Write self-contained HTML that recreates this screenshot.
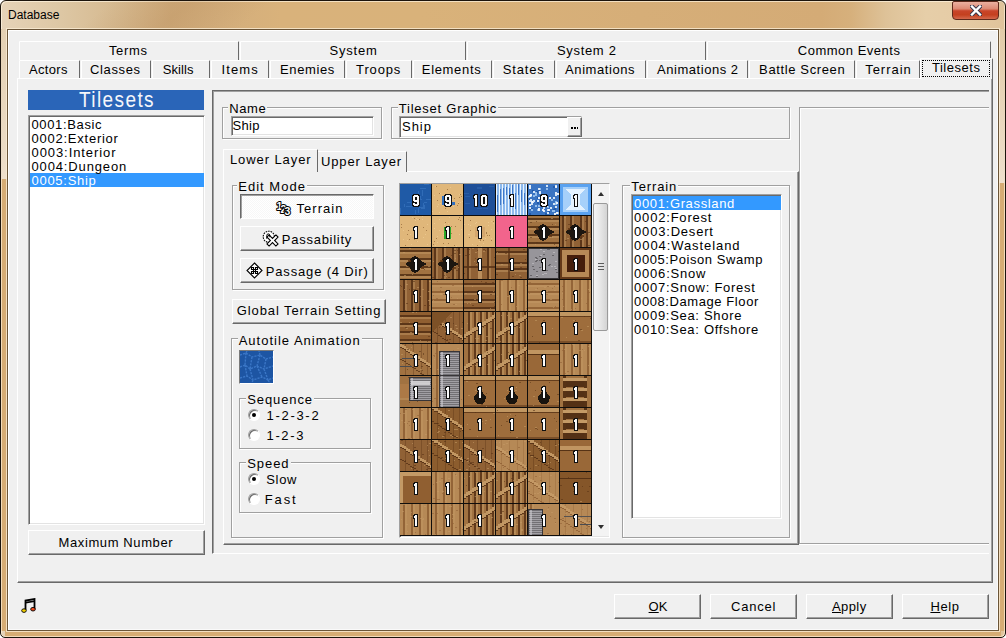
<!DOCTYPE html>
<html><head><meta charset="utf-8">
<style>
*{box-sizing:border-box;margin:0;padding:0}
html,body{width:1006px;height:638px;overflow:hidden;background:#fff}
body{position:relative;font-family:"Liberation Sans",sans-serif;font-size:13px;color:#000}
.a{position:absolute}
.t{position:absolute;white-space:nowrap;line-height:14px}
.frame{left:0;top:0;width:1006px;height:638px;border:1px solid #1c140c;border-radius:6px 6px 5px 5px;box-shadow:inset 1px 1px rgba(255,245,225,.7),inset -1px -1px rgba(255,245,225,.6);
 background:linear-gradient(90deg,#e6d3b8 0px,#ddc7a4 60px,#d5b88e 120px,#ceaa7a 170px,#d3ae7c 220px,#d9b27b 280px,#d9b27a 420px,#d6ae78 640px,#d4ab76 820px,#d6b07c 850px,#dec298 885px,#e6cea8 925px,#e6cca6 955px,#dfc39a 1006px)}
.close{left:952px;top:1px;width:47px;height:19px;border:1px solid #5e2a1c;border-radius:2px 2px 4px 4px;background:linear-gradient(180deg,#eab0a0 0%,#dc8a74 40%,#c9452a 52%,#c4401f 75%,#d4684c 100%)}
.client{left:7px;top:29px;width:992px;height:602px;background:#f0f0f0;border:1px solid #6b5538;box-shadow:inset 1px 1px #fff,inset -1px -1px #fafafa,0 0 0 1px rgba(250,236,212,.8)}
.raised{background:#f0f0f0;border-style:solid;border-width:1px;border-color:#fff #696969 #696969 #fff;box-shadow:inset -1px -1px #a0a0a0}
.sunken{border-style:solid;border-width:1px;border-color:#a0a0a0 #fff #fff #a0a0a0;box-shadow:inset 1px 1px #696969,inset -1px -1px #e3e3e3}
.group{border:1px solid #a0a0a0;box-shadow:inset 1px 1px #fff,1px 1px #fff}
.tab{border-style:solid;border-width:1px 1px 0 1px;border-color:#fff #696969 transparent #fff;border-radius:1px 1px 0 0;background:#f0f0f0}
.radio{width:12px;height:12px;border-radius:50%;border:1px solid;border-color:#a0a0a0 #fff #fff #a0a0a0;background:#fff;box-shadow:inset 1px 1px #696969}
.dot{left:3px;top:3px;width:4px;height:4px;border-radius:50%;background:#000}
.lbl{background:#f0f0f0;padding:0 1px}
</style></head><body>
<div class="a frame"></div>
<div class="a" style="left:95px;top:1px;width:160px;height:28px;transform:skewX(-50deg);background:linear-gradient(90deg,rgba(185,140,90,0),rgba(185,140,90,.28) 50%,rgba(185,140,90,0))"></div>
<div class="a close"><svg class="a" style="left:17px;top:3px" width="12" height="11" viewBox="0 0 12 11"><path d="M2 1.5 L10 9.5 M10 1.5 L2 9.5" stroke="#34344a" stroke-width="4.2" stroke-linecap="square"/><path d="M2 1.5 L10 9.5 M10 1.5 L2 9.5" stroke="#fff" stroke-width="2.4" stroke-linecap="square"/></svg></div>
<div class="a" style="left:1px;top:29px;width:6px;height:150px;background:linear-gradient(180deg,#e4d0b2,#ecdcc6 85%,#efe0cc)"></div>
<div class="a" style="left:999px;top:29px;width:6px;height:154px;background:linear-gradient(180deg,#e2cca8,#ecdcc6 85%,#efe0cc)"></div>
<div class="a" style="left:1px;top:179px;width:6px;height:452px;background:#d6ac74;box-shadow:inset 1px 0 rgba(255,240,215,.7)"></div>
<div class="a" style="left:999px;top:183px;width:6px;height:448px;background:#d6ac74;box-shadow:inset -1px 0 rgba(255,240,215,.7)"></div>
<div class="a" style="left:5px;top:631px;width:996px;height:6px;background:#d6ac74;box-shadow:inset 0 -1px rgba(255,240,215,.7)"></div>
<div class="a client"></div>
<div class="a tab" style="left:19px;top:41px;width:220px;height:19px"></div>
<div class="a tab" style="left:240px;top:41px;width:226px;height:19px"></div>
<div class="a tab" style="left:467px;top:41px;width:239px;height:19px"></div>
<div class="a tab" style="left:707px;top:41px;width:284px;height:19px"></div>
<div class="a tab" style="left:19px;top:60px;width:61px;height:19px"></div>
<div class="a tab" style="left:81px;top:60px;width:70px;height:19px"></div>
<div class="a tab" style="left:152px;top:60px;width:58px;height:19px"></div>
<div class="a tab" style="left:211px;top:60px;width:58px;height:19px"></div>
<div class="a tab" style="left:270px;top:60px;width:75px;height:19px"></div>
<div class="a tab" style="left:346px;top:60px;width:66px;height:19px"></div>
<div class="a tab" style="left:413px;top:60px;width:79px;height:19px"></div>
<div class="a tab" style="left:493px;top:60px;width:62px;height:19px"></div>
<div class="a tab" style="left:556px;top:60px;width:90px;height:19px"></div>
<div class="a tab" style="left:647px;top:60px;width:101px;height:19px"></div>
<div class="a tab" style="left:749px;top:60px;width:106px;height:19px"></div>
<div class="a tab" style="left:856px;top:60px;width:64px;height:19px"></div>
<div class="a" style="left:17px;top:78px;width:976px;height:505px;border-style:solid;border-width:1px;border-color:#fff #696969 #696969 #fff;box-shadow:inset -1px -1px #a0a0a0;background:#f0f0f0"></div>
<div class="a tab" style="left:920px;top:58px;width:73px;height:21px;border-bottom:0"><div class="a" style="left:1px;top:1px;width:68px;height:17px;border:1px dotted #000"></div></div>
<div class="a" style="left:28px;top:90px;width:176px;height:20px;background:#2a65b8;color:#f4f6fa;font-size:19px;line-height:22px;text-align:center;letter-spacing:1.4px;text-indent:1px"><span style="display:inline-block;transform:scaleY(1.12);transform-origin:50% 75%">Tilesets</span></div>
<div class="a sunken" style="left:28px;top:115px;width:177px;height:410px;background:#fff"></div>
<div class="a" style="left:30px;top:173px;width:174px;height:14px;background:#3399ff"></div>
<div class="a raised" style="left:28px;top:530px;width:177px;height:25px"></div>
<div class="a" style="left:212px;top:90px;width:777px;height:464px;border-style:solid;border-width:1px 0 1px 1px;border-color:#696969 #fff #fff #696969;box-shadow:inset 1px 1px #a0a0a0"></div>
<div class="a group" style="left:222px;top:107px;width:160px;height:32px"></div>
<div class="a sunken" style="left:231px;top:116px;width:143px;height:20px;background:#fff"></div>
<div class="a group" style="left:391px;top:107px;width:399px;height:32px"></div>
<div class="a sunken" style="left:399px;top:116px;width:183px;height:22px;background:#fff"></div>
<div class="a raised" style="left:567px;top:117px;width:15px;height:20px"><div class="a" style="left:3px;top:9px;width:7px;height:2px;background:repeating-linear-gradient(90deg,#000 0 2px,transparent 2px 3px)"></div></div>
<div class="a" style="left:799px;top:107px;width:190px;height:437px;border-style:solid;border-width:1px 0 1px 1px;border-color:#a0a0a0;box-shadow:inset 1px 1px #fff,0 1px #fff"></div>
<div class="a" style="left:223px;top:171px;width:576px;height:374px;border-style:solid;border-width:1px;border-color:#fff #696969 #696969 #fff;box-shadow:inset -1px -1px #a0a0a0"></div>
<div class="a tab" style="left:317px;top:151px;width:90px;height:21px"></div>
<div class="a tab" style="left:223px;top:149px;width:95px;height:23px;border-bottom:0"></div>
<div class="a group" style="left:232px;top:185px;width:152px;height:105px"></div>
<div class="a" style="left:240px;top:194px;width:134px;height:25px;border-style:solid;border-width:1px;border-color:#696969 #fff #fff #696969;box-shadow:inset 1px 1px #a0a0a0;background-color:#f7f7f7;background-image:linear-gradient(45deg,#fff 25%,transparent 25%,transparent 75%,#fff 75%),linear-gradient(45deg,#fff 25%,transparent 25%,transparent 75%,#fff 75%);background-size:2px 2px;background-position:0 0,1px 1px"></div>
<div class="a raised" style="left:240px;top:226px;width:134px;height:25px"></div>
<div class="a raised" style="left:240px;top:258px;width:134px;height:25px"></div>
<div class="a raised" style="left:232px;top:299px;width:154px;height:25px"></div>
<svg class="a" style="left:274px;top:198px" width="20" height="19" viewBox="0 0 20 19" font-family="Liberation Sans" font-weight="bold" font-size="10.5" fill="#fff" stroke="#000" stroke-width="2" paint-order="stroke" stroke-linejoin="round"><text x="2.5" y="12">1</text><text x="6.5" y="14.5">2</text><text x="10.5" y="17">3</text></svg>
<svg class="a" style="left:261px;top:229px" width="20" height="19" viewBox="0 0 20 19"><circle cx="7.8" cy="7.8" r="5.6" fill="#fff" stroke="#000" stroke-width="1.1" stroke-dasharray="1.6 0.9"/><polygon transform="translate(11.5 11.5) rotate(45)" points="-1.5,-6.3 1.5,-6.3 1.5,-1.5 6.3,-1.5 6.3,1.5 1.5,1.5 1.5,6.3 -1.5,6.3 -1.5,1.5 -6.3,1.5 -6.3,-1.5 -1.5,-1.5" fill="#fff" stroke="#000" stroke-width="1.1"/><path d="M5.8 9.8 V6.4 Q5.8 4.9 7.3 4.9 Q8.8 4.9 8.8 6.4 V8.2" fill="none" stroke="#000" stroke-width="1"/></svg>
<svg class="a" style="left:246px;top:262px" width="17" height="17" viewBox="0 0 17 17"><polygon points="8.5,1 16,8.5 8.5,16 1,8.5" fill="#fff" stroke="#000" stroke-width="1.1"/><path d="M5.5 5.5h2v2h-2zM9.5 5.5h2v2h-2zM5.5 9.5h2v2h-2zM9.5 9.5h2v2h-2zM5.5 7.5h6M5.5 9.5h6M7.5 5.5v6M9.5 5.5v6" fill="none" stroke="#000" stroke-width="1.1"/></svg>
<div class="a group" style="left:231px;top:338px;width:152px;height:200px"></div>
<div class="a" style="left:239px;top:350px;width:35px;height:34px;border-style:solid;border-width:1px;border-color:#7a7a7a #fff #fff #7a7a7a;background:#1d55a3;overflow:hidden"><svg width="33" height="32" viewBox="0 0 33 32"><path d="M0 4 L6 2 L12 6 L20 4 L26 8 L33 6 M0 16 L5 14 L10 18 L17 15 L24 18 L33 15 M0 27 L7 25 L13 29 L22 26 L28 29 L33 27 M6 2 L5 14 M12 6 L10 18 M20 4 L17 15 M26 8 L24 18 M5 14 L7 25 M10 18 L13 29 M17 15 L22 26 M24 18 L28 29 M13 29 L12 32 M28 29 L30 32 M6 2 L7 0 M20 4 L19 0" fill="none" stroke="#3a76c6" stroke-width="1.4" stroke-dasharray="2.2 1"/></svg></div>
<div class="a group" style="left:239px;top:398px;width:132px;height:51px"></div>
<div class="a group" style="left:239px;top:462px;width:132px;height:51px"></div>
<div class="a radio" style="left:248px;top:409px"><div class="a dot"></div></div>
<div class="a radio" style="left:248px;top:429px"></div>
<div class="a radio" style="left:248px;top:473px"><div class="a dot"></div></div>
<div class="a radio" style="left:248px;top:493px"></div>
<div class="a sunken" style="left:399px;top:183px;width:211px;height:355px;background:#f0f0f0"></div>
<div class="a" style="left:400px;top:184px;width:192px;height:352px;overflow:hidden;background:#b07a44"><svg width="192" height="352" viewBox="0 0 192 352" shape-rendering="crispEdges"><defs><g id="n1"><path fill="#101010" d="M14 10h3v3h-3zM15 10h3v3h-3zM13 11h3v3h-3zM14 11h3v3h-3zM15 11h3v3h-3zM13 12h3v3h-3zM14 12h3v3h-3zM15 12h3v3h-3zM14 13h3v3h-3zM15 13h3v3h-3zM14 14h3v3h-3zM15 14h3v3h-3zM14 15h3v3h-3zM15 15h3v3h-3zM14 16h3v3h-3zM15 16h3v3h-3zM14 17h3v3h-3zM15 17h3v3h-3zM14 18h3v3h-3zM15 18h3v3h-3zM14 19h3v3h-3zM15 19h3v3h-3zM14 20h3v3h-3zM15 20h3v3h-3z"/><path fill="#fafafa" d="M15 11h1v1h-1zM16 11h1v1h-1zM14 12h1v1h-1zM15 12h1v1h-1zM16 12h1v1h-1zM14 13h1v1h-1zM15 13h1v1h-1zM16 13h1v1h-1zM15 14h1v1h-1zM16 14h1v1h-1zM15 15h1v1h-1zM16 15h1v1h-1zM15 16h1v1h-1zM16 16h1v1h-1zM15 17h1v1h-1zM16 17h1v1h-1zM15 18h1v1h-1zM16 18h1v1h-1zM15 19h1v1h-1zM16 19h1v1h-1zM15 20h1v1h-1zM16 20h1v1h-1zM15 21h1v1h-1zM16 21h1v1h-1z"/></g><g id="n9"><path fill="#101010" d="M13 10h3v3h-3zM14 10h3v3h-3zM15 10h3v3h-3zM16 10h3v3h-3zM12 11h3v3h-3zM13 11h3v3h-3zM14 11h3v3h-3zM15 11h3v3h-3zM16 11h3v3h-3zM17 11h3v3h-3zM12 12h3v3h-3zM13 12h3v3h-3zM16 12h3v3h-3zM17 12h3v3h-3zM12 13h3v3h-3zM13 13h3v3h-3zM16 13h3v3h-3zM17 13h3v3h-3zM12 14h3v3h-3zM13 14h3v3h-3zM16 14h3v3h-3zM17 14h3v3h-3zM12 15h3v3h-3zM13 15h3v3h-3zM14 15h3v3h-3zM15 15h3v3h-3zM16 15h3v3h-3zM17 15h3v3h-3zM13 16h3v3h-3zM14 16h3v3h-3zM15 16h3v3h-3zM16 16h3v3h-3zM17 16h3v3h-3zM16 17h3v3h-3zM17 17h3v3h-3zM12 18h3v3h-3zM13 18h3v3h-3zM16 18h3v3h-3zM17 18h3v3h-3zM12 19h3v3h-3zM13 19h3v3h-3zM14 19h3v3h-3zM15 19h3v3h-3zM16 19h3v3h-3zM17 19h3v3h-3zM13 20h3v3h-3zM14 20h3v3h-3zM15 20h3v3h-3zM16 20h3v3h-3z"/><path fill="#fafafa" d="M14 11h1v1h-1zM15 11h1v1h-1zM16 11h1v1h-1zM17 11h1v1h-1zM13 12h1v1h-1zM14 12h1v1h-1zM15 12h1v1h-1zM16 12h1v1h-1zM17 12h1v1h-1zM18 12h1v1h-1zM13 13h1v1h-1zM14 13h1v1h-1zM17 13h1v1h-1zM18 13h1v1h-1zM13 14h1v1h-1zM14 14h1v1h-1zM17 14h1v1h-1zM18 14h1v1h-1zM13 15h1v1h-1zM14 15h1v1h-1zM17 15h1v1h-1zM18 15h1v1h-1zM13 16h1v1h-1zM14 16h1v1h-1zM15 16h1v1h-1zM16 16h1v1h-1zM17 16h1v1h-1zM18 16h1v1h-1zM14 17h1v1h-1zM15 17h1v1h-1zM16 17h1v1h-1zM17 17h1v1h-1zM18 17h1v1h-1zM17 18h1v1h-1zM18 18h1v1h-1zM13 19h1v1h-1zM14 19h1v1h-1zM17 19h1v1h-1zM18 19h1v1h-1zM13 20h1v1h-1zM14 20h1v1h-1zM15 20h1v1h-1zM16 20h1v1h-1zM17 20h1v1h-1zM18 20h1v1h-1zM14 21h1v1h-1zM15 21h1v1h-1zM16 21h1v1h-1zM17 21h1v1h-1z"/></g><g id="n10"><path fill="#101010" d="M10 10h3v3h-3zM11 10h3v3h-3zM9 11h3v3h-3zM10 11h3v3h-3zM11 11h3v3h-3zM9 12h3v3h-3zM10 12h3v3h-3zM11 12h3v3h-3zM10 13h3v3h-3zM11 13h3v3h-3zM10 14h3v3h-3zM11 14h3v3h-3zM10 15h3v3h-3zM11 15h3v3h-3zM10 16h3v3h-3zM11 16h3v3h-3zM10 17h3v3h-3zM11 17h3v3h-3zM10 18h3v3h-3zM11 18h3v3h-3zM10 19h3v3h-3zM11 19h3v3h-3zM10 20h3v3h-3zM11 20h3v3h-3zM17 10h3v3h-3zM18 10h3v3h-3zM19 10h3v3h-3zM20 10h3v3h-3zM16 11h3v3h-3zM17 11h3v3h-3zM18 11h3v3h-3zM19 11h3v3h-3zM20 11h3v3h-3zM21 11h3v3h-3zM16 12h3v3h-3zM17 12h3v3h-3zM20 12h3v3h-3zM21 12h3v3h-3zM16 13h3v3h-3zM17 13h3v3h-3zM20 13h3v3h-3zM21 13h3v3h-3zM16 14h3v3h-3zM17 14h3v3h-3zM20 14h3v3h-3zM21 14h3v3h-3zM16 15h3v3h-3zM17 15h3v3h-3zM20 15h3v3h-3zM21 15h3v3h-3zM16 16h3v3h-3zM17 16h3v3h-3zM20 16h3v3h-3zM21 16h3v3h-3zM16 17h3v3h-3zM17 17h3v3h-3zM20 17h3v3h-3zM21 17h3v3h-3zM16 18h3v3h-3zM17 18h3v3h-3zM20 18h3v3h-3zM21 18h3v3h-3zM16 19h3v3h-3zM17 19h3v3h-3zM18 19h3v3h-3zM19 19h3v3h-3zM20 19h3v3h-3zM21 19h3v3h-3zM17 20h3v3h-3zM18 20h3v3h-3zM19 20h3v3h-3zM20 20h3v3h-3z"/><path fill="#fafafa" d="M11 11h1v1h-1zM12 11h1v1h-1zM10 12h1v1h-1zM11 12h1v1h-1zM12 12h1v1h-1zM10 13h1v1h-1zM11 13h1v1h-1zM12 13h1v1h-1zM11 14h1v1h-1zM12 14h1v1h-1zM11 15h1v1h-1zM12 15h1v1h-1zM11 16h1v1h-1zM12 16h1v1h-1zM11 17h1v1h-1zM12 17h1v1h-1zM11 18h1v1h-1zM12 18h1v1h-1zM11 19h1v1h-1zM12 19h1v1h-1zM11 20h1v1h-1zM12 20h1v1h-1zM11 21h1v1h-1zM12 21h1v1h-1zM18 11h1v1h-1zM19 11h1v1h-1zM20 11h1v1h-1zM21 11h1v1h-1zM17 12h1v1h-1zM18 12h1v1h-1zM19 12h1v1h-1zM20 12h1v1h-1zM21 12h1v1h-1zM22 12h1v1h-1zM17 13h1v1h-1zM18 13h1v1h-1zM21 13h1v1h-1zM22 13h1v1h-1zM17 14h1v1h-1zM18 14h1v1h-1zM21 14h1v1h-1zM22 14h1v1h-1zM17 15h1v1h-1zM18 15h1v1h-1zM21 15h1v1h-1zM22 15h1v1h-1zM17 16h1v1h-1zM18 16h1v1h-1zM21 16h1v1h-1zM22 16h1v1h-1zM17 17h1v1h-1zM18 17h1v1h-1zM21 17h1v1h-1zM22 17h1v1h-1zM17 18h1v1h-1zM18 18h1v1h-1zM21 18h1v1h-1zM22 18h1v1h-1zM17 19h1v1h-1zM18 19h1v1h-1zM21 19h1v1h-1zM22 19h1v1h-1zM17 20h1v1h-1zM18 20h1v1h-1zM19 20h1v1h-1zM20 20h1v1h-1zM21 20h1v1h-1zM22 20h1v1h-1zM18 21h1v1h-1zM19 21h1v1h-1zM20 21h1v1h-1zM21 21h1v1h-1z"/></g></defs><path fill="#1f5aa6" d="M0 0h31v31h-31z"/><path fill="#3470bc" fill-opacity="0.8" d="M7 18h4v1h-4zM18 7h1v5h-1zM19 15h3v1h-3zM15 19h1v3h-1zM26 15h5v1h-5zM15 26h1v4h-1zM6 22h6v1h-6zM22 6h1v6h-1zM12 20h4v1h-4zM20 12h1v4h-1zM20 4h6v1h-6zM4 20h1v3h-1zM21 24h3v1h-3zM24 21h1v4h-1zM24 18h3v1h-3zM18 24h1v5h-1zM24 0h5v1h-5zM0 24h1v6h-1zM19 23h6v1h-6zM23 19h1v6h-1z"/><path fill="#0c0c0c" d="M31 0h1v32h-1zM0 31h32v1h-32z"/><path fill="#e0b77a" d="M32 0h31v31h-31z"/><path fill="#9a6e3e" fill-opacity="0.8" d="M45 24h1v1h-1zM58 19h1v1h-1zM47 5h1v1h-1zM61 12h1v1h-1zM36 2h1v1h-1zM37 16h1v1h-1zM39 9h1v1h-1zM54 14h1v1h-1zM57 21h1v1h-1zM60 10h1v1h-1zM46 17h1v1h-1zM59 13h1v1h-1zM51 12h1v1h-1zM50 19h1v1h-1z"/><path fill="#f0d098" fill-opacity="0.6" d="M45 18h1v1h-1zM39 28h1v1h-1zM42 21h1v1h-1zM61 29h1v1h-1zM32 27h1v1h-1zM40 19h1v1h-1zM53 22h1v1h-1zM37 22h1v1h-1zM59 10h1v1h-1zM62 17h1v1h-1zM60 18h1v1h-1zM50 3h1v1h-1zM54 20h1v1h-1zM38 20h1v1h-1zM58 18h1v1h-1zM40 9h1v1h-1zM35 2h1v1h-1zM47 27h1v1h-1zM52 15h1v1h-1zM34 11h1v1h-1z"/><path fill="#2f6fc0" d="M42 12h10v9h-10zM51 18h4v3h-4z"/><path fill="#0c0c0c" d="M63 0h1v32h-1zM32 31h32v1h-32z"/><path fill="#1e4f98" d="M64 0h31v31h-31z"/><path fill="#2a60aa" fill-opacity="0.8" d="M89 2h5v1h-5zM77 4h5v1h-5zM64 9h5v1h-5zM77 24h5v1h-5zM77 3h5v1h-5zM65 19h5v1h-5zM83 24h5v1h-5zM65 12h5v1h-5z"/><path fill="#0c0c0c" d="M95 0h1v32h-1zM64 31h32v1h-32z"/><path fill="#8cb8ec" d="M96 0h31v31h-31z"/><path fill="#f0f8ff" fill-opacity="0.95" d="M96 0h1v31h-1zM99 0h1v31h-1zM102 0h1v31h-1zM105 0h1v31h-1zM108 0h1v31h-1zM111 0h1v31h-1zM114 0h1v31h-1zM117 0h1v31h-1zM120 0h1v31h-1zM123 0h1v31h-1zM126 0h1v31h-1z"/><path fill="#2c68c0" fill-opacity="0.8" d="M97 11h1v17h-1zM100 5h1v16h-1zM103 4h1v16h-1zM106 3h1v8h-1zM109 4h1v8h-1zM112 1h1v9h-1zM115 9h1v16h-1zM118 0h1v11h-1zM121 6h1v12h-1zM124 9h1v12h-1zM127 2h1v19h-1z"/><path fill="#0c0c0c" d="M127 0h1v32h-1zM96 31h32v1h-32z"/><path fill="#3a74c2" d="M128 0h31v31h-31z"/><path fill="#1f58a8" fill-opacity="0.9" d="M129 15h2v2h-2zM129 24h2v2h-2zM129 29h2v2h-2zM129 29h2v2h-2zM131 24h2v2h-2zM132 6h2v2h-2zM136 7h2v2h-2zM136 16h2v2h-2zM137 13h2v2h-2zM137 16h2v2h-2zM137 18h2v2h-2zM138 5h2v2h-2zM140 14h2v2h-2zM145 29h2v2h-2zM146 1h2v2h-2zM147 20h2v2h-2zM148 12h2v2h-2zM148 25h2v2h-2zM148 27h2v2h-2zM153 2h2v2h-2zM153 25h2v2h-2zM154 24h2v2h-2z"/><path fill="#9cc4ee" fill-opacity="0.9" d="M128 12h2v2h-2zM130 11h2v2h-2zM131 25h2v2h-2zM133 11h2v2h-2zM135 8h2v2h-2zM135 10h2v2h-2zM135 21h2v2h-2zM137 25h2v2h-2zM138 21h2v2h-2zM139 4h2v2h-2zM139 8h2v2h-2zM141 20h2v2h-2zM142 11h2v2h-2zM142 11h2v2h-2zM145 10h2v2h-2zM145 10h2v2h-2zM146 4h2v2h-2zM147 22h2v2h-2zM151 15h2v2h-2zM152 26h2v2h-2zM153 26h2v2h-2zM155 17h2v2h-2zM155 19h2v2h-2zM157 28h2v2h-2z"/><path fill="#e8f2fc" fill-opacity="0.9" d="M129 16h2v2h-2zM130 15h2v2h-2zM131 19h2v2h-2zM132 17h2v2h-2zM133 7h2v2h-2zM133 16h2v2h-2zM138 4h2v2h-2zM139 7h2v2h-2zM139 8h2v2h-2zM143 20h2v2h-2zM143 23h2v2h-2zM143 26h2v2h-2zM144 16h2v2h-2zM144 17h2v2h-2zM146 1h2v2h-2zM146 21h2v2h-2zM147 25h2v2h-2zM147 28h2v2h-2zM150 23h2v2h-2zM153 13h2v2h-2zM153 19h2v2h-2zM155 1h2v2h-2zM155 10h2v2h-2zM155 22h2v2h-2z"/><path fill="#f8fcff" fill-opacity="0.9" d="M129 1h2v2h-2zM129 3h2v2h-2zM129 11h2v2h-2zM129 20h2v2h-2zM129 23h2v2h-2zM130 10h2v2h-2zM131 17h2v2h-2zM137 16h2v2h-2zM138 13h2v2h-2zM138 24h2v2h-2zM138 25h2v2h-2zM142 25h2v2h-2zM148 25h2v2h-2zM149 13h2v2h-2zM154 29h2v2h-2zM155 2h2v2h-2zM155 8h2v2h-2zM156 18h2v2h-2zM156 28h2v2h-2zM157 9h2v2h-2z"/><path fill="#0c0c0c" d="M159 0h1v32h-1zM128 31h32v1h-32z"/><path fill="#5aa2f0" d="M160 0h31v31h-31z"/><path fill="#a6d0fa" d="M163 3h25v25h-25z"/><polygon fill="#e4f2ff" points="166,5 185,5 180,11 180,20 185,26 166,26 171,20 171,11"/><path fill="#0c0c0c" d="M191 0h1v32h-1zM160 31h32v1h-32z"/><path fill="#e0b77a" d="M0 32h31v31h-31z"/><path fill="#9a6e3e" fill-opacity="0.8" d="M14 34h1v1h-1zM12 53h1v1h-1zM16 57h1v1h-1zM23 43h1v1h-1zM14 55h1v1h-1zM14 47h1v1h-1zM1 40h1v1h-1zM7 50h1v1h-1zM9 55h1v1h-1zM19 35h1v1h-1zM26 46h1v1h-1zM8 46h1v1h-1zM5 61h1v1h-1zM1 43h1v1h-1z"/><path fill="#f0d098" fill-opacity="0.6" d="M11 60h1v1h-1zM17 57h1v1h-1zM27 40h1v1h-1zM3 46h1v1h-1zM22 35h1v1h-1zM30 58h1v1h-1zM23 53h1v1h-1zM27 60h1v1h-1zM16 57h1v1h-1zM12 53h1v1h-1zM3 55h1v1h-1zM10 50h1v1h-1zM17 35h1v1h-1zM25 50h1v1h-1zM22 32h1v1h-1zM15 36h1v1h-1zM7 56h1v1h-1zM12 33h1v1h-1zM16 34h1v1h-1zM18 35h1v1h-1z"/><path fill="#0c0c0c" d="M31 32h1v32h-1zM0 63h32v1h-32z"/><path fill="#e0b77a" d="M32 32h31v31h-31z"/><path fill="#9a6e3e" fill-opacity="0.8" d="M54 61h1v1h-1zM45 38h1v1h-1zM59 33h1v1h-1zM43 59h1v1h-1zM60 36h1v1h-1zM33 60h1v1h-1zM36 54h1v1h-1zM48 59h1v1h-1zM55 42h1v1h-1zM51 42h1v1h-1zM58 35h1v1h-1zM34 57h1v1h-1zM51 49h1v1h-1zM49 55h1v1h-1z"/><path fill="#f0d098" fill-opacity="0.6" d="M39 35h1v1h-1zM49 55h1v1h-1zM35 61h1v1h-1zM49 33h1v1h-1zM49 42h1v1h-1zM59 50h1v1h-1zM37 58h1v1h-1zM34 39h1v1h-1zM37 52h1v1h-1zM39 46h1v1h-1zM51 54h1v1h-1zM56 62h1v1h-1zM44 40h1v1h-1zM43 51h1v1h-1zM44 62h1v1h-1zM43 49h1v1h-1zM45 62h1v1h-1zM34 44h1v1h-1zM48 39h1v1h-1zM61 45h1v1h-1z"/><path fill="#28a828" d="M44 43h7v12h-7z"/><path fill="#0c0c0c" d="M63 32h1v32h-1zM32 63h32v1h-32z"/><path fill="#e0b77a" d="M64 32h31v31h-31z"/><path fill="#9a6e3e" fill-opacity="0.8" d="M91 56h1v1h-1zM70 46h1v1h-1zM87 51h1v1h-1zM89 51h1v1h-1zM86 49h1v1h-1zM86 48h1v1h-1zM69 53h1v1h-1zM77 61h1v1h-1zM93 37h1v1h-1zM70 36h1v1h-1zM80 56h1v1h-1zM80 55h1v1h-1zM81 47h1v1h-1zM83 56h1v1h-1z"/><path fill="#f0d098" fill-opacity="0.6" d="M91 37h1v1h-1zM68 40h1v1h-1zM88 38h1v1h-1zM68 50h1v1h-1zM80 42h1v1h-1zM93 39h1v1h-1zM91 54h1v1h-1zM81 62h1v1h-1zM88 41h1v1h-1zM85 54h1v1h-1zM91 45h1v1h-1zM83 59h1v1h-1zM82 50h1v1h-1zM72 60h1v1h-1zM70 41h1v1h-1zM64 40h1v1h-1zM79 57h1v1h-1zM76 38h1v1h-1zM69 50h1v1h-1zM75 39h1v1h-1z"/><path fill="#c89660" fill-opacity="0.5" d="M75 43h10v10h-10z"/><path fill="#0c0c0c" d="M95 32h1v32h-1zM64 63h32v1h-32z"/><path fill="#f2648c" d="M96 32h31v31h-31z"/><path fill="#0c0c0c" d="M127 32h1v32h-1zM96 63h32v1h-32z"/><path fill="#b4804a" d="M128 32h31v31h-31z"/><path fill="#5e3618" fill-opacity="0.9" d="M128 34h31v2h-31zM128 42h31v2h-31zM128 50h31v2h-31zM128 58h31v2h-31z"/><path fill="#dcae74" fill-opacity="0.5" d="M128 36h31v2h-31zM128 44h31v2h-31zM128 52h31v2h-31zM128 60h31v2h-31z"/><path fill="#dcae74" fill-opacity="0.55" d="M151 34h2v1h-2zM135 60h1v1h-1zM152 53h1v1h-1zM155 40h1v1h-1zM150 53h1v1h-1zM145 42h1v1h-1z"/><path fill="#5e3618" fill-opacity="0.55" d="M138 47h1v1h-1zM150 47h1v1h-1zM154 60h1v1h-1zM156 62h1v1h-1zM152 40h1v1h-1zM136 37h1v1h-1zM141 34h1v1h-1zM136 58h2v1h-2zM142 50h2v1h-2zM138 42h2v1h-2zM130 38h2v1h-2zM130 53h2v1h-2z"/><polygon fill="#1c1612" points="133,48 138,45 139,42 143,40 147,42 149,45 155,48 149,51 147,55 143,57 139,55 138,51"/><path fill="#6a3a14" fill-opacity="0.8" d="M136 44h3v2h-3zM149 51h3v2h-3z"/><path fill="#0c0c0c" d="M159 32h1v32h-1zM128 63h32v1h-32z"/><path fill="#a06c3c" d="M160 32h31v31h-31z"/><path fill="#5e3618" fill-opacity="0.9" d="M162 32h2v31h-2zM170 32h2v31h-2zM180 32h2v31h-2zM186 32h2v31h-2z"/><path fill="#dcae74" fill-opacity="0.45" d="M164 32h2v31h-2zM172 32h2v31h-2zM182 32h2v31h-2zM188 32h2v31h-2z"/><path fill="#dcae74" fill-opacity="0.55" d="M190 54h2v1h-2zM190 62h2v1h-2zM177 48h1v1h-1zM176 43h1v1h-1zM181 55h1v1h-1zM189 49h1v1h-1zM180 55h2v1h-2zM164 33h2v1h-2zM167 54h2v1h-2z"/><path fill="#5e3618" fill-opacity="0.55" d="M188 48h2v1h-2zM171 56h2v1h-2zM181 53h2v1h-2zM183 52h1v1h-1zM188 61h2v1h-2zM180 37h2v1h-2zM185 37h1v1h-1zM165 56h2v1h-2zM168 40h2v1h-2z"/><polygon fill="#1c1612" points="165,48 170,45 171,42 175,40 179,42 181,45 187,48 181,51 179,55 175,57 171,55 170,51"/><path fill="#6a3a14" fill-opacity="0.8" d="M168 44h3v2h-3zM181 51h3v2h-3z"/><path fill="#0c0c0c" d="M191 32h1v32h-1zM160 63h32v1h-32z"/><path fill="#b4804a" d="M0 64h31v31h-31z"/><path fill="#5e3618" fill-opacity="0.9" d="M0 66h31v2h-31zM0 74h31v2h-31zM0 82h31v2h-31zM0 90h31v2h-31z"/><path fill="#dcae74" fill-opacity="0.5" d="M0 68h31v2h-31zM0 76h31v2h-31zM0 84h31v2h-31zM0 92h31v2h-31z"/><path fill="#dcae74" fill-opacity="0.55" d="M30 76h2v1h-2zM3 68h2v1h-2zM6 82h2v1h-2zM12 90h1v1h-1zM4 91h2v1h-2zM17 80h1v1h-1zM9 64h2v1h-2zM28 82h2v1h-2zM16 85h2v1h-2zM21 79h1v1h-1z"/><path fill="#5e3618" fill-opacity="0.55" d="M24 66h2v1h-2zM21 67h1v1h-1zM6 91h2v1h-2zM30 90h2v1h-2zM23 84h1v1h-1zM24 85h1v1h-1zM16 84h2v1h-2zM25 80h1v1h-1z"/><polygon fill="#1c1612" points="5,80 10,77 11,74 15,72 19,74 21,77 27,80 21,83 19,87 15,89 11,87 10,83"/><path fill="#6a3a14" fill-opacity="0.8" d="M8 76h3v2h-3zM21 83h3v2h-3z"/><path fill="#0c0c0c" d="M31 64h1v32h-1zM0 95h32v1h-32z"/><path fill="#a06c3c" d="M32 64h31v31h-31z"/><path fill="#5e3618" fill-opacity="0.9" d="M34 64h2v31h-2zM42 64h2v31h-2zM52 64h2v31h-2zM58 64h2v31h-2z"/><path fill="#dcae74" fill-opacity="0.45" d="M36 64h2v31h-2zM44 64h2v31h-2zM54 64h2v31h-2zM60 64h2v31h-2z"/><path fill="#dcae74" fill-opacity="0.55" d="M58 83h1v1h-1zM55 74h1v1h-1zM59 70h2v1h-2zM33 77h1v1h-1zM46 92h1v1h-1z"/><path fill="#5e3618" fill-opacity="0.55" d="M48 93h2v1h-2zM41 94h1v1h-1zM57 66h1v1h-1zM51 71h1v1h-1zM32 93h2v1h-2zM59 75h1v1h-1zM39 79h2v1h-2zM54 69h2v1h-2zM54 66h2v1h-2zM47 73h1v1h-1zM56 86h2v1h-2zM43 91h2v1h-2zM43 83h2v1h-2z"/><polygon fill="#1c1612" points="37,80 42,77 43,74 47,72 51,74 53,77 59,80 53,83 51,87 47,89 43,87 42,83"/><path fill="#6a3a14" fill-opacity="0.8" d="M40 76h3v2h-3zM53 83h3v2h-3z"/><path fill="#0c0c0c" d="M63 64h1v32h-1zM32 95h32v1h-32z"/><path fill="#a06c3c" d="M64 64h31v31h-31z"/><path fill="#5e3618" fill-opacity="0.9" d="M67 64h2v31h-2zM87 64h2v31h-2z"/><path fill="#dcae74" fill-opacity="0.45" d="M69 64h2v31h-2zM89 64h2v31h-2z"/><path fill="#dcae74" fill-opacity="0.55" d="M75 68h2v1h-2zM76 80h1v1h-1zM74 77h1v1h-1zM83 67h2v1h-2zM89 94h2v1h-2zM72 64h2v1h-2z"/><path fill="#5e3618" fill-opacity="0.55" d="M64 89h1v1h-1zM69 70h1v1h-1zM68 67h1v1h-1zM69 65h1v1h-1zM65 71h2v1h-2zM79 64h1v1h-1zM76 79h1v1h-1zM83 65h2v1h-2zM94 73h2v1h-2zM75 74h1v1h-1zM77 66h1v1h-1zM85 66h1v1h-1z"/><path fill="#dcae74" fill-opacity="0.8" d="M78 64h4v31h-4z"/><path fill="#5e3618" fill-opacity="0.8" d="M64 82h31v2h-31z"/><path fill="#0c0c0c" d="M95 64h1v32h-1zM64 95h32v1h-32z"/><path fill="#a06c3c" d="M96 64h31v31h-31z"/><path fill="#5e3618" fill-opacity="0.9" d="M96 67h31v2h-31zM96 78h31v2h-31zM96 84h31v2h-31z"/><path fill="#dcae74" fill-opacity="0.5" d="M96 69h31v2h-31zM96 80h31v2h-31zM96 86h31v2h-31z"/><path fill="#dcae74" fill-opacity="0.55" d="M120 79h2v1h-2zM108 81h2v1h-2zM119 91h2v1h-2zM101 80h2v1h-2zM97 68h1v1h-1zM115 90h1v1h-1z"/><path fill="#5e3618" fill-opacity="0.55" d="M97 79h1v1h-1zM112 92h2v1h-2zM125 75h1v1h-1zM120 83h2v1h-2zM105 69h2v1h-2zM120 93h2v1h-2zM113 75h1v1h-1zM109 78h1v1h-1zM118 79h2v1h-2zM96 90h2v1h-2zM118 85h1v1h-1zM123 65h2v1h-2z"/><path fill="#5e3618" fill-opacity="0.7" d="M108 64h2v31h-2z"/><path fill="#0c0c0c" d="M127 64h1v32h-1zM96 95h32v1h-32z"/><path fill="#3a3a3e" d="M128 64h31v31h-31z"/><path fill="#a8a8b0" d="M129 65h29v29h-29z"/><path fill="#6a6a72" fill-opacity="0.9" d="M130 91h2v1h-2zM132 79h2v1h-2zM132 82h2v1h-2zM133 85h2v1h-2zM135 73h2v1h-2zM135 77h2v1h-2zM136 74h2v1h-2zM136 76h2v1h-2zM136 87h2v1h-2zM136 92h2v1h-2zM139 72h2v1h-2zM139 76h2v1h-2zM139 83h2v1h-2zM143 70h2v1h-2zM143 74h2v1h-2zM144 89h2v1h-2zM146 86h2v1h-2zM147 65h2v1h-2zM148 65h2v1h-2zM148 81h2v1h-2zM149 80h2v1h-2zM152 71h2v1h-2zM155 85h2v1h-2zM156 88h2v1h-2z"/><path fill="#d0d0d8" fill-opacity="0.9" d="M132 79h2v1h-2zM135 75h2v1h-2zM136 91h2v1h-2zM140 65h2v1h-2zM140 71h2v1h-2zM141 84h2v1h-2zM142 90h2v1h-2zM143 67h2v1h-2zM144 83h2v1h-2zM144 89h2v1h-2zM145 89h2v1h-2zM151 82h2v1h-2zM153 68h2v1h-2zM154 82h2v1h-2zM155 77h2v1h-2zM155 84h2v1h-2z"/><path fill="#0c0c0c" d="M159 64h1v32h-1zM128 95h32v1h-32z"/><path fill="#6e3e1c" d="M160 64h31v31h-31z"/><path fill="#cc9a62" d="M162 66h27v27h-27z"/><path fill="#4a200c" d="M167 71h18v17h-18z"/><path fill="#0c0c0c" d="M191 64h1v32h-1zM160 95h32v1h-32z"/><path fill="#a06c3c" d="M0 96h31v31h-31z"/><path fill="#5e3618" fill-opacity="0.9" d="M3 96h2v31h-2zM11 96h2v31h-2zM19 96h2v31h-2zM27 96h2v31h-2z"/><path fill="#dcae74" fill-opacity="0.45" d="M5 96h2v31h-2zM13 96h2v31h-2zM21 96h2v31h-2zM29 96h2v31h-2z"/><path fill="#dcae74" fill-opacity="0.55" d="M29 97h2v1h-2zM4 105h1v1h-1zM6 100h2v1h-2zM22 105h2v1h-2zM28 116h2v1h-2zM17 103h2v1h-2zM28 107h2v1h-2zM20 112h1v1h-1z"/><path fill="#5e3618" fill-opacity="0.55" d="M0 101h1v1h-1zM1 102h1v1h-1zM13 97h2v1h-2zM6 119h2v1h-2zM14 105h2v1h-2zM13 105h2v1h-2zM9 105h1v1h-1zM29 121h1v1h-1zM5 126h1v1h-1zM24 121h2v1h-2z"/><path fill="#0c0c0c" d="M31 96h1v32h-1zM0 127h32v1h-32z"/><path fill="#cc9a62" d="M32 96h31v31h-31z"/><path fill="#a06c3c" fill-opacity="0.9" d="M32 99h31v2h-31zM32 107h31v2h-31zM32 115h31v2h-31zM32 123h31v2h-31z"/><path fill="#dcae74" fill-opacity="0.5" d="M32 101h31v2h-31zM32 109h31v2h-31zM32 117h31v2h-31zM32 125h31v2h-31z"/><path fill="#dcae74" fill-opacity="0.55" d="M62 121h2v1h-2zM40 109h2v1h-2zM33 116h1v1h-1zM57 114h1v1h-1zM55 120h2v1h-2zM40 110h2v1h-2z"/><path fill="#a06c3c" fill-opacity="0.55" d="M33 111h1v1h-1zM51 113h1v1h-1zM40 103h2v1h-2zM40 106h1v1h-1zM58 106h1v1h-1zM37 97h1v1h-1zM33 124h2v1h-2zM53 120h2v1h-2zM52 101h2v1h-2zM53 100h1v1h-1zM43 110h2v1h-2zM36 114h2v1h-2z"/><path fill="#0c0c0c" d="M63 96h1v32h-1zM32 127h32v1h-32z"/><path fill="#a06c3c" d="M64 96h31v31h-31z"/><path fill="#5e3618" fill-opacity="0.9" d="M64 99h31v2h-31zM64 107h31v2h-31zM64 115h31v2h-31zM64 123h31v2h-31z"/><path fill="#dcae74" fill-opacity="0.5" d="M64 101h31v2h-31zM64 109h31v2h-31zM64 117h31v2h-31zM64 125h31v2h-31z"/><path fill="#dcae74" fill-opacity="0.55" d="M65 109h2v1h-2zM93 107h1v1h-1zM72 102h1v1h-1zM74 115h2v1h-2zM70 119h1v1h-1zM67 119h1v1h-1zM90 124h1v1h-1z"/><path fill="#5e3618" fill-opacity="0.55" d="M90 110h2v1h-2zM82 115h1v1h-1zM72 121h2v1h-2zM85 98h2v1h-2zM79 124h2v1h-2zM94 122h2v1h-2zM65 100h2v1h-2zM92 98h2v1h-2zM94 118h1v1h-1zM79 110h2v1h-2zM81 97h1v1h-1z"/><path fill="#0c0c0c" d="M95 96h1v32h-1zM64 127h32v1h-32z"/><path fill="#cc9a62" d="M96 96h31v31h-31z"/><path fill="#a06c3c" fill-opacity="0.9" d="M99 96h2v31h-2zM107 96h2v31h-2zM115 96h2v31h-2zM123 96h2v31h-2z"/><path fill="#dcae74" fill-opacity="0.45" d="M101 96h2v31h-2zM109 96h2v31h-2zM117 96h2v31h-2zM125 96h2v31h-2z"/><path fill="#dcae74" fill-opacity="0.55" d="M118 101h2v1h-2zM116 122h1v1h-1zM97 112h1v1h-1zM107 126h1v1h-1zM96 126h2v1h-2zM107 112h2v1h-2z"/><path fill="#a06c3c" fill-opacity="0.55" d="M126 101h1v1h-1zM116 96h1v1h-1zM101 120h1v1h-1zM108 120h1v1h-1zM101 96h2v1h-2zM99 100h2v1h-2zM111 103h1v1h-1zM126 124h2v1h-2zM123 106h2v1h-2zM110 113h2v1h-2zM113 110h2v1h-2zM115 105h1v1h-1z"/><path fill="#0c0c0c" d="M127 96h1v32h-1zM96 127h32v1h-32z"/><path fill="#cc9a62" d="M128 96h31v31h-31z"/><path fill="#a06c3c" fill-opacity="0.9" d="M128 99h31v2h-31zM128 107h31v2h-31zM128 115h31v2h-31zM128 123h31v2h-31z"/><path fill="#dcae74" fill-opacity="0.5" d="M128 101h31v2h-31zM128 109h31v2h-31zM128 117h31v2h-31zM128 125h31v2h-31z"/><path fill="#dcae74" fill-opacity="0.55" d="M128 101h1v1h-1zM146 117h2v1h-2zM146 107h2v1h-2zM150 115h2v1h-2zM154 106h2v1h-2zM144 103h2v1h-2zM135 105h2v1h-2zM153 123h1v1h-1zM144 112h2v1h-2z"/><path fill="#a06c3c" fill-opacity="0.55" d="M155 122h1v1h-1zM154 102h1v1h-1zM129 109h1v1h-1zM152 104h1v1h-1zM146 110h2v1h-2zM147 102h2v1h-2zM137 104h1v1h-1zM142 100h2v1h-2zM129 98h2v1h-2z"/><path fill="#0c0c0c" d="M159 96h1v32h-1zM128 127h32v1h-32z"/><path fill="#cc9a62" d="M160 96h31v31h-31z"/><path fill="#a06c3c" fill-opacity="0.9" d="M163 96h2v31h-2zM171 96h2v31h-2zM179 96h2v31h-2zM187 96h2v31h-2z"/><path fill="#dcae74" fill-opacity="0.45" d="M165 96h2v31h-2zM173 96h2v31h-2zM181 96h2v31h-2zM189 96h2v31h-2z"/><path fill="#dcae74" fill-opacity="0.55" d="M171 125h1v1h-1zM166 96h1v1h-1zM189 106h2v1h-2zM181 114h1v1h-1zM188 105h2v1h-2zM163 122h1v1h-1zM162 109h1v1h-1z"/><path fill="#a06c3c" fill-opacity="0.55" d="M187 115h2v1h-2zM187 108h2v1h-2zM162 107h1v1h-1zM175 124h1v1h-1zM187 108h2v1h-2zM171 112h2v1h-2zM164 106h1v1h-1zM162 115h1v1h-1zM162 102h2v1h-2zM186 119h1v1h-1zM189 108h1v1h-1z"/><path fill="#0c0c0c" d="M191 96h1v32h-1zM160 127h32v1h-32z"/><path fill="#a06a38" d="M0 128h31v31h-31z"/><path fill="#5e3618" fill-opacity="0.9" d="M0 131h31v2h-31zM0 139h31v2h-31zM0 147h31v2h-31zM0 155h31v2h-31z"/><path fill="#dcae74" fill-opacity="0.5" d="M0 133h31v2h-31zM0 141h31v2h-31zM0 149h31v2h-31zM0 157h31v2h-31z"/><path fill="#dcae74" fill-opacity="0.55" d="M12 128h2v1h-2zM6 144h2v1h-2zM0 138h2v1h-2zM20 156h1v1h-1zM10 148h2v1h-2zM16 128h1v1h-1zM2 133h1v1h-1zM9 138h1v1h-1z"/><path fill="#5e3618" fill-opacity="0.55" d="M5 143h2v1h-2zM30 149h2v1h-2zM3 148h1v1h-1zM28 152h2v1h-2zM7 156h2v1h-2zM12 158h1v1h-1zM26 155h2v1h-2zM14 149h1v1h-1zM11 147h2v1h-2zM27 157h1v1h-1z"/><path fill="#0c0c0c" d="M31 128h1v32h-1zM0 159h32v1h-32z"/><path fill="#a06c3c" d="M32 128h31v31h-31z"/><path fill="#5e3618" fill-opacity="0.35" d="M37 128h1v31h-1zM45 128h1v31h-1zM53 128h1v31h-1zM59 128h1v31h-1z"/><path fill="#dcae74" fill-opacity="0.95" d="M32 132h2v3h-2zM34 133h2v3h-2zM36 134h2v3h-2zM38 136h2v3h-2zM40 137h2v3h-2zM42 139h2v3h-2zM44 140h2v3h-2zM46 141h2v3h-2zM48 143h2v3h-2zM50 144h2v3h-2zM52 146h2v3h-2zM54 147h2v3h-2zM56 148h2v3h-2zM58 150h2v3h-2zM60 151h2v3h-2zM62 153h2v3h-2z"/><path fill="#5e3618" fill-opacity="0.9" d="M32 135h2v1h-2zM34 136h2v1h-2zM36 137h2v1h-2zM38 139h2v1h-2zM40 140h2v1h-2zM42 142h2v1h-2zM44 143h2v1h-2zM46 144h2v1h-2zM48 146h2v1h-2zM50 147h2v1h-2zM52 149h2v1h-2zM54 150h2v1h-2zM56 151h2v1h-2zM58 153h2v1h-2zM60 154h2v1h-2zM62 156h2v1h-2z"/><path fill="#5e3618" fill-opacity="0.8" d="M32 147h2v1h-2zM34 148h2v1h-2zM36 149h2v1h-2zM38 151h2v1h-2zM40 152h2v1h-2zM42 154h2v1h-2zM44 155h2v1h-2zM46 156h2v1h-2zM48 158h2v1h-2z"/><path fill="#dcae74" fill-opacity="0.55" d="M55 141h2v1h-2zM61 144h2v1h-2zM41 142h1v1h-1zM56 144h2v1h-2zM45 147h1v1h-1zM50 133h2v1h-2z"/><path fill="#5e3618" fill-opacity="0.55" d="M47 155h1v1h-1zM35 158h2v1h-2zM42 133h1v1h-1zM39 140h1v1h-1zM43 140h1v1h-1zM40 139h2v1h-2zM62 138h1v1h-1zM39 143h1v1h-1zM53 139h1v1h-1zM46 139h1v1h-1zM49 155h2v1h-2zM45 149h2v1h-2z"/><polygon fill="#8a5a2c" points="32,128 52,128 32,148"/><path fill="#0c0c0c" d="M63 128h1v32h-1zM32 159h32v1h-32z"/><path fill="#b4804a" d="M64 128h31v31h-31z"/><path fill="#5e3618" fill-opacity="0.85" d="M68 128h2v31h-2zM74 128h2v31h-2zM80 128h2v31h-2zM86 128h2v31h-2zM92 128h2v31h-2z"/><path fill="#dcae74" fill-opacity="0.55" d="M70 128h2v31h-2zM76 128h2v31h-2zM82 128h2v31h-2zM88 128h2v31h-2zM94 128h2v31h-2z"/><path fill="#dcae74" fill-opacity="0.95" d="M64 150h2v4h-2zM66 148h2v4h-2zM68 147h2v4h-2zM70 146h2v4h-2zM72 144h2v4h-2zM74 143h2v4h-2zM76 142h2v4h-2zM78 140h2v4h-2zM80 139h2v4h-2zM82 138h2v4h-2zM84 137h2v4h-2zM86 135h2v4h-2zM88 134h2v4h-2zM90 133h2v4h-2zM92 131h2v4h-2zM94 130h2v4h-2z"/><path fill="#5e3618" fill-opacity="0.9" d="M64 154h2v1h-2zM66 152h2v1h-2zM68 151h2v1h-2zM70 150h2v1h-2zM72 148h2v1h-2zM74 147h2v1h-2zM76 146h2v1h-2zM78 144h2v1h-2zM80 143h2v1h-2zM82 142h2v1h-2zM84 141h2v1h-2zM86 139h2v1h-2zM88 138h2v1h-2zM90 137h2v1h-2zM92 135h2v1h-2zM94 134h2v1h-2z"/><path fill="#dcae74" fill-opacity="0.55" d="M77 138h1v1h-1zM67 139h1v1h-1zM79 148h1v1h-1zM75 154h1v1h-1zM86 152h2v1h-2zM85 156h2v1h-2zM77 154h2v1h-2z"/><path fill="#5e3618" fill-opacity="0.55" d="M90 144h2v1h-2zM83 143h1v1h-1zM78 139h2v1h-2z"/><path fill="#0c0c0c" d="M95 128h1v32h-1zM64 159h32v1h-32z"/><path fill="#b4804a" d="M96 128h31v31h-31z"/><path fill="#5e3618" fill-opacity="0.85" d="M100 128h2v31h-2zM106 128h2v31h-2zM112 128h2v31h-2zM118 128h2v31h-2zM124 128h2v31h-2z"/><path fill="#dcae74" fill-opacity="0.55" d="M102 128h2v31h-2zM108 128h2v31h-2zM114 128h2v31h-2zM120 128h2v31h-2zM126 128h2v31h-2z"/><path fill="#dcae74" fill-opacity="0.95" d="M96 150h2v4h-2zM98 148h2v4h-2zM100 147h2v4h-2zM102 146h2v4h-2zM104 144h2v4h-2zM106 143h2v4h-2zM108 142h2v4h-2zM110 140h2v4h-2zM112 139h2v4h-2zM114 138h2v4h-2zM116 137h2v4h-2zM118 135h2v4h-2zM120 134h2v4h-2zM122 133h2v4h-2zM124 131h2v4h-2zM126 130h2v4h-2z"/><path fill="#5e3618" fill-opacity="0.9" d="M96 154h2v1h-2zM98 152h2v1h-2zM100 151h2v1h-2zM102 150h2v1h-2zM104 148h2v1h-2zM106 147h2v1h-2zM108 146h2v1h-2zM110 144h2v1h-2zM112 143h2v1h-2zM114 142h2v1h-2zM116 141h2v1h-2zM118 139h2v1h-2zM120 138h2v1h-2zM122 137h2v1h-2zM124 135h2v1h-2zM126 134h2v1h-2z"/><path fill="#dcae74" fill-opacity="0.55" d="M118 134h2v1h-2zM119 143h1v1h-1zM110 134h2v1h-2zM107 131h1v1h-1zM118 134h1v1h-1zM101 131h1v1h-1zM99 157h2v1h-2z"/><path fill="#5e3618" fill-opacity="0.55" d="M109 149h2v1h-2zM107 146h1v1h-1zM106 145h1v1h-1z"/><path fill="#0c0c0c" d="M127 128h1v32h-1zM96 159h32v1h-32z"/><path fill="#b07a44" d="M128 128h31v31h-31z"/><path fill="#dcae74" fill-opacity="0.9" d="M128 128h31v4h-31z"/><path fill="#5e3618" fill-opacity="0.8" d="M128 132h31v1h-31z"/><path fill="#5e3618" fill-opacity="0.5" d="M128 157h31v2h-31z"/><path fill="#dcae74" fill-opacity="0.55" d="M136 131h1v1h-1zM152 144h1v1h-1zM135 136h2v1h-2zM156 131h1v1h-1z"/><path fill="#5e3618" fill-opacity="0.55" d="M144 138h2v1h-2zM143 136h2v1h-2zM143 139h2v1h-2zM139 158h1v1h-1zM132 152h1v1h-1zM142 138h1v1h-1z"/><path fill="#0c0c0c" d="M159 128h1v32h-1zM128 159h32v1h-32z"/><path fill="#b07a44" d="M160 128h31v31h-31z"/><path fill="#dcae74" fill-opacity="0.9" d="M160 128h31v4h-31z"/><path fill="#5e3618" fill-opacity="0.8" d="M160 132h31v1h-31z"/><path fill="#5e3618" fill-opacity="0.5" d="M160 157h31v2h-31z"/><path fill="#dcae74" fill-opacity="0.55" d="M187 142h2v1h-2zM181 146h2v1h-2zM173 136h2v1h-2zM161 133h2v1h-2zM166 153h1v1h-1z"/><path fill="#5e3618" fill-opacity="0.55" d="M184 132h1v1h-1zM175 136h1v1h-1zM178 156h2v1h-2zM190 134h2v1h-2zM180 145h2v1h-2z"/><path fill="#0c0c0c" d="M191 128h1v32h-1zM160 159h32v1h-32z"/><path fill="#b4804a" d="M0 160h31v31h-31z"/><path fill="#5e3618" fill-opacity="0.35" d="M5 160h1v31h-1zM13 160h1v31h-1zM21 160h1v31h-1zM27 160h1v31h-1z"/><path fill="#dcae74" fill-opacity="0.95" d="M0 160h2v3h-2zM2 161h2v3h-2zM4 162h2v3h-2zM6 164h2v3h-2zM8 165h2v3h-2zM10 167h2v3h-2zM12 168h2v3h-2zM14 169h2v3h-2zM16 171h2v3h-2zM18 172h2v3h-2zM20 174h2v3h-2zM22 175h2v3h-2zM24 176h2v3h-2zM26 178h2v3h-2zM28 179h2v3h-2zM30 181h2v3h-2z"/><path fill="#5e3618" fill-opacity="0.9" d="M0 163h2v1h-2zM2 164h2v1h-2zM4 165h2v1h-2zM6 167h2v1h-2zM8 168h2v1h-2zM10 170h2v1h-2zM12 171h2v1h-2zM14 172h2v1h-2zM16 174h2v1h-2zM18 175h2v1h-2zM20 177h2v1h-2zM22 178h2v1h-2zM24 179h2v1h-2zM26 181h2v1h-2zM28 182h2v1h-2zM30 184h2v1h-2z"/><path fill="#5e3618" fill-opacity="0.8" d="M0 175h2v1h-2zM2 176h2v1h-2zM4 177h2v1h-2zM6 179h2v1h-2zM8 180h2v1h-2zM10 182h2v1h-2zM12 183h2v1h-2zM14 184h2v1h-2zM16 186h2v1h-2zM18 187h2v1h-2zM20 189h2v1h-2zM22 190h2v1h-2z"/><path fill="#dcae74" fill-opacity="0.55" d="M2 179h1v1h-1zM4 163h1v1h-1zM20 185h2v1h-2zM1 170h2v1h-2zM11 163h1v1h-1zM12 160h2v1h-2zM12 170h1v1h-1z"/><path fill="#5e3618" fill-opacity="0.55" d="M5 166h1v1h-1zM23 169h1v1h-1zM10 181h1v1h-1zM17 181h2v1h-2zM22 186h1v1h-1zM21 182h2v1h-2zM23 170h1v1h-1zM7 185h1v1h-1zM7 165h2v1h-2zM19 167h2v1h-2zM12 160h2v1h-2z"/><path fill="#50545c" d="M0 182h12v1h-12zM2 174h14v1h-14z"/><path fill="#0c0c0c" d="M31 160h1v32h-1zM0 191h32v1h-32z"/><path fill="#cc9a62" d="M32 160h31v31h-31z"/><path fill="#a06c3c" fill-opacity="0.9" d="M36 160h2v31h-2z"/><path fill="#dcae74" fill-opacity="0.45" d="M38 160h2v31h-2z"/><path fill="#dcae74" fill-opacity="0.55" d="M46 178h2v1h-2zM51 172h1v1h-1zM45 180h2v1h-2zM37 185h2v1h-2zM34 175h1v1h-1zM48 187h2v1h-2zM47 175h2v1h-2zM57 164h2v1h-2zM55 172h1v1h-1zM34 190h2v1h-2z"/><path fill="#a06c3c" fill-opacity="0.55" d="M35 169h1v1h-1zM36 169h1v1h-1zM48 169h1v1h-1zM56 173h1v1h-1zM47 179h1v1h-1zM33 171h2v1h-2zM34 172h1v1h-1zM53 166h1v1h-1z"/><path fill="#3a3a40" d="M39 167h21v25h-21z"/><path fill="#b4b4bc" d="M40 168h19v23h-19z"/><path fill="#78787e" fill-opacity="0.9" d="M40 168h19v1h-19zM40 170h19v1h-19zM40 172h19v1h-19zM40 174h19v1h-19zM40 176h19v1h-19zM40 178h19v1h-19zM40 180h19v1h-19zM40 182h19v1h-19zM40 184h19v1h-19zM40 186h19v1h-19zM40 188h19v1h-19zM40 190h19v1h-19z"/><path fill="#e8e8f0" fill-opacity="0.6" d="M41 168h2v23h-2z"/><path fill="#0c0c0c" d="M63 160h1v32h-1zM32 191h32v1h-32z"/><path fill="#b4804a" d="M64 160h31v31h-31z"/><path fill="#5e3618" fill-opacity="0.85" d="M68 160h2v31h-2zM74 160h2v31h-2zM80 160h2v31h-2zM86 160h2v31h-2zM92 160h2v31h-2z"/><path fill="#dcae74" fill-opacity="0.55" d="M70 160h2v31h-2zM76 160h2v31h-2zM82 160h2v31h-2zM88 160h2v31h-2zM94 160h2v31h-2z"/><path fill="#dcae74" fill-opacity="0.95" d="M64 182h2v4h-2zM66 180h2v4h-2zM68 179h2v4h-2zM70 178h2v4h-2zM72 176h2v4h-2zM74 175h2v4h-2zM76 174h2v4h-2zM78 172h2v4h-2zM80 171h2v4h-2zM82 170h2v4h-2zM84 169h2v4h-2zM86 167h2v4h-2zM88 166h2v4h-2zM90 165h2v4h-2zM92 163h2v4h-2zM94 162h2v4h-2z"/><path fill="#5e3618" fill-opacity="0.9" d="M64 186h2v1h-2zM66 184h2v1h-2zM68 183h2v1h-2zM70 182h2v1h-2zM72 180h2v1h-2zM74 179h2v1h-2zM76 178h2v1h-2zM78 176h2v1h-2zM80 175h2v1h-2zM82 174h2v1h-2zM84 173h2v1h-2zM86 171h2v1h-2zM88 170h2v1h-2zM90 169h2v1h-2zM92 167h2v1h-2zM94 166h2v1h-2z"/><path fill="#dcae74" fill-opacity="0.55" d="M75 181h2v1h-2zM77 181h2v1h-2zM87 180h2v1h-2zM84 168h2v1h-2zM79 184h1v1h-1zM83 161h1v1h-1z"/><path fill="#5e3618" fill-opacity="0.55" d="M94 176h1v1h-1zM76 173h2v1h-2zM94 160h2v1h-2zM87 168h1v1h-1z"/><path fill="#0c0c0c" d="M95 160h1v32h-1zM64 191h32v1h-32z"/><path fill="#b4804a" d="M96 160h31v31h-31z"/><path fill="#5e3618" fill-opacity="0.85" d="M100 160h2v31h-2zM106 160h2v31h-2zM112 160h2v31h-2zM118 160h2v31h-2zM124 160h2v31h-2z"/><path fill="#dcae74" fill-opacity="0.55" d="M102 160h2v31h-2zM108 160h2v31h-2zM114 160h2v31h-2zM120 160h2v31h-2zM126 160h2v31h-2z"/><path fill="#dcae74" fill-opacity="0.95" d="M96 182h2v4h-2zM98 180h2v4h-2zM100 179h2v4h-2zM102 178h2v4h-2zM104 176h2v4h-2zM106 175h2v4h-2zM108 174h2v4h-2zM110 172h2v4h-2zM112 171h2v4h-2zM114 170h2v4h-2zM116 169h2v4h-2zM118 167h2v4h-2zM120 166h2v4h-2zM122 165h2v4h-2zM124 163h2v4h-2zM126 162h2v4h-2z"/><path fill="#5e3618" fill-opacity="0.9" d="M96 186h2v1h-2zM98 184h2v1h-2zM100 183h2v1h-2zM102 182h2v1h-2zM104 180h2v1h-2zM106 179h2v1h-2zM108 178h2v1h-2zM110 176h2v1h-2zM112 175h2v1h-2zM114 174h2v1h-2zM116 173h2v1h-2zM118 171h2v1h-2zM120 170h2v1h-2zM122 169h2v1h-2zM124 167h2v1h-2zM126 166h2v1h-2z"/><path fill="#dcae74" fill-opacity="0.55" d="M101 170h1v1h-1zM122 161h2v1h-2zM120 172h2v1h-2zM124 166h1v1h-1zM119 187h1v1h-1z"/><path fill="#5e3618" fill-opacity="0.55" d="M97 179h2v1h-2zM125 176h2v1h-2zM124 173h2v1h-2zM108 168h1v1h-1zM108 175h2v1h-2z"/><path fill="#0c0c0c" d="M127 160h1v32h-1zM96 191h32v1h-32z"/><path fill="#ab7540" d="M128 160h31v31h-31z"/><path fill="#dcae74" fill-opacity="0.9" d="M128 166h31v4h-31z"/><path fill="#5e3618" d="M128 170h31v1h-31z"/><path fill="#0c0c0c" d="M159 160h1v32h-1zM128 191h32v1h-32z"/><path fill="#cc9a62" d="M160 160h31v31h-31z"/><path fill="#a06c3c" fill-opacity="0.9" d="M163 160h2v31h-2zM171 160h2v31h-2zM179 160h2v31h-2zM187 160h2v31h-2z"/><path fill="#dcae74" fill-opacity="0.45" d="M165 160h2v31h-2zM173 160h2v31h-2zM181 160h2v31h-2zM189 160h2v31h-2z"/><path fill="#dcae74" fill-opacity="0.55" d="M176 177h2v1h-2zM175 172h1v1h-1zM188 181h1v1h-1zM179 166h2v1h-2zM164 165h1v1h-1zM188 162h2v1h-2zM184 166h1v1h-1zM172 160h2v1h-2zM167 189h1v1h-1z"/><path fill="#a06c3c" fill-opacity="0.55" d="M182 165h1v1h-1zM164 172h1v1h-1zM164 189h2v1h-2zM180 173h2v1h-2zM174 176h1v1h-1zM160 178h2v1h-2zM172 166h1v1h-1zM162 166h2v1h-2zM167 187h2v1h-2z"/><path fill="#0c0c0c" d="M191 160h1v32h-1zM160 191h32v1h-32z"/><path fill="#b4804a" d="M0 192h31v31h-31z"/><path fill="#5e3618" fill-opacity="0.9" d="M0 212h31v2h-31z"/><path fill="#dcae74" fill-opacity="0.5" d="M0 214h31v2h-31z"/><path fill="#dcae74" fill-opacity="0.55" d="M26 210h1v1h-1zM30 198h1v1h-1zM6 201h2v1h-2zM3 205h2v1h-2zM27 202h2v1h-2zM14 216h2v1h-2zM27 208h1v1h-1z"/><path fill="#5e3618" fill-opacity="0.55" d="M11 198h2v1h-2zM17 217h1v1h-1zM8 193h2v1h-2zM9 218h1v1h-1zM25 212h1v1h-1zM3 211h1v1h-1zM7 202h1v1h-1zM10 211h1v1h-1zM10 209h2v1h-2zM5 207h1v1h-1zM5 203h2v1h-2z"/><path fill="#c08850" d="M0 200h10v14h-10z"/><path fill="#3a3a40" d="M9 193h23v24h-23z"/><path fill="#b4b4bc" d="M10 194h21v22h-21z"/><path fill="#78787e" fill-opacity="0.9" d="M10 194h21v1h-21zM10 196h21v1h-21zM10 198h21v1h-21zM10 200h21v1h-21zM10 202h21v1h-21zM10 204h21v1h-21zM10 206h21v1h-21zM10 208h21v1h-21zM10 210h21v1h-21zM10 212h21v1h-21zM10 214h21v1h-21z"/><path fill="#e8e8f0" fill-opacity="0.6" d="M11 194h2v22h-2z"/><path fill="#f0f0f4" fill-opacity="0.9" d="M11 197h19v4h-19z"/><path fill="#0c0c0c" d="M31 192h1v32h-1zM0 223h32v1h-32z"/><path fill="#cc9a62" d="M32 192h31v31h-31z"/><path fill="#a06c3c" fill-opacity="0.9" d="M36 192h2v31h-2zM56 192h2v31h-2z"/><path fill="#dcae74" fill-opacity="0.45" d="M38 192h2v31h-2zM58 192h2v31h-2z"/><path fill="#dcae74" fill-opacity="0.55" d="M44 207h2v1h-2zM43 209h1v1h-1zM59 202h1v1h-1zM47 217h1v1h-1zM35 200h1v1h-1zM46 193h1v1h-1zM46 215h2v1h-2z"/><path fill="#a06c3c" fill-opacity="0.55" d="M55 192h2v1h-2zM47 209h2v1h-2zM34 214h2v1h-2zM49 195h1v1h-1zM57 222h2v1h-2zM33 204h1v1h-1zM56 208h2v1h-2zM53 205h1v1h-1zM56 194h1v1h-1zM32 217h1v1h-1zM61 215h1v1h-1z"/><path fill="#3a3a40" d="M39 191h21v33h-21z"/><path fill="#b4b4bc" d="M40 192h19v31h-19z"/><path fill="#78787e" fill-opacity="0.9" d="M40 192h19v1h-19zM40 194h19v1h-19zM40 196h19v1h-19zM40 198h19v1h-19zM40 200h19v1h-19zM40 202h19v1h-19zM40 204h19v1h-19zM40 206h19v1h-19zM40 208h19v1h-19zM40 210h19v1h-19zM40 212h19v1h-19zM40 214h19v1h-19zM40 216h19v1h-19zM40 218h19v1h-19zM40 220h19v1h-19zM40 222h19v1h-19z"/><path fill="#e8e8f0" fill-opacity="0.6" d="M41 192h2v31h-2z"/><path fill="#0c0c0c" d="M63 192h1v32h-1zM32 223h32v1h-32z"/><path fill="#b07a44" d="M64 192h31v31h-31z"/><path fill="#dcae74" fill-opacity="0.9" d="M64 192h31v4h-31z"/><path fill="#5e3618" fill-opacity="0.8" d="M64 196h31v1h-31z"/><path fill="#5e3618" fill-opacity="0.5" d="M64 221h31v2h-31z"/><path fill="#dcae74" fill-opacity="0.55" d="M86 222h1v1h-1zM82 205h1v1h-1zM75 206h2v1h-2zM68 211h2v1h-2zM73 194h1v1h-1zM66 197h2v1h-2z"/><path fill="#5e3618" fill-opacity="0.55" d="M86 209h1v1h-1zM81 220h2v1h-2zM76 199h2v1h-2zM75 216h1v1h-1z"/><polygon fill="#181410" points="80,203 83,209 86,213 85,218 82,220 78,220 75,218 74,213 77,209"/><path fill="#0c0c0c" d="M95 192h1v32h-1zM64 223h32v1h-32z"/><path fill="#b07a44" d="M96 192h31v31h-31z"/><path fill="#dcae74" fill-opacity="0.9" d="M96 192h31v4h-31z"/><path fill="#5e3618" fill-opacity="0.8" d="M96 196h31v1h-31z"/><path fill="#5e3618" fill-opacity="0.5" d="M96 221h31v2h-31z"/><path fill="#dcae74" fill-opacity="0.55" d="M115 206h2v1h-2zM112 205h1v1h-1zM116 203h1v1h-1zM107 206h1v1h-1zM110 208h2v1h-2zM111 209h2v1h-2zM118 194h2v1h-2zM104 214h1v1h-1z"/><path fill="#5e3618" fill-opacity="0.55" d="M119 198h2v1h-2zM108 214h1v1h-1z"/><polygon fill="#181410" points="112,203 115,209 118,213 117,218 114,220 110,220 107,218 106,213 109,209"/><path fill="#0c0c0c" d="M127 192h1v32h-1zM96 223h32v1h-32z"/><path fill="#b07a44" d="M128 192h31v31h-31z"/><path fill="#dcae74" fill-opacity="0.9" d="M128 192h31v4h-31z"/><path fill="#5e3618" fill-opacity="0.8" d="M128 196h31v1h-31z"/><path fill="#5e3618" fill-opacity="0.5" d="M128 221h31v2h-31z"/><path fill="#dcae74" fill-opacity="0.55" d="M133 221h1v1h-1zM142 201h2v1h-2zM157 217h2v1h-2zM133 212h2v1h-2zM145 194h2v1h-2z"/><path fill="#5e3618" fill-opacity="0.55" d="M157 210h2v1h-2zM135 206h1v1h-1zM149 198h1v1h-1zM143 201h2v1h-2zM130 198h1v1h-1z"/><polygon fill="#181410" points="144,203 147,209 150,213 149,218 146,220 142,220 139,218 138,213 141,209"/><path fill="#0c0c0c" d="M159 192h1v32h-1zM128 223h32v1h-32z"/><path fill="#b4804a" d="M160 192h31v31h-31z"/><path fill="#5e3618" d="M163 192h3v31h-3zM184 192h3v31h-3z"/><path fill="#dcae74" d="M163 194h24v3h-24z"/><path fill="#5a3418" d="M166 197h18v6h-18z"/><path fill="#dcae74" d="M163 204h24v3h-24z"/><path fill="#5a3418" d="M166 207h18v6h-18z"/><path fill="#dcae74" d="M163 214h24v3h-24z"/><path fill="#5a3418" d="M166 217h18v6h-18z"/><path fill="#0c0c0c" d="M191 192h1v32h-1zM160 223h32v1h-32z"/><path fill="#cc9a62" d="M0 224h31v31h-31z"/><path fill="#a06c3c" fill-opacity="0.9" d="M3 224h2v31h-2zM11 224h2v31h-2zM19 224h2v31h-2zM27 224h2v31h-2z"/><path fill="#dcae74" fill-opacity="0.45" d="M5 224h2v31h-2zM13 224h2v31h-2zM21 224h2v31h-2zM29 224h2v31h-2z"/><path fill="#dcae74" fill-opacity="0.55" d="M3 229h2v1h-2zM25 250h2v1h-2zM4 238h2v1h-2zM12 225h2v1h-2zM26 224h1v1h-1zM1 236h2v1h-2zM29 245h2v1h-2zM23 224h1v1h-1zM11 254h1v1h-1zM26 236h2v1h-2z"/><path fill="#a06c3c" fill-opacity="0.55" d="M5 225h2v1h-2zM7 239h1v1h-1zM17 231h2v1h-2zM9 241h1v1h-1zM8 237h2v1h-2zM0 229h1v1h-1zM21 226h2v1h-2zM8 254h2v1h-2z"/><path fill="#0c0c0c" d="M31 224h1v32h-1zM0 255h32v1h-32z"/><path fill="#9c6834" d="M32 224h31v31h-31z"/><path fill="#5e3618" fill-opacity="0.35" d="M37 224h1v31h-1zM45 224h1v31h-1zM53 224h1v31h-1zM59 224h1v31h-1z"/><path fill="#dcae74" fill-opacity="0.95" d="M32 224h2v1h-2zM34 224h2v3h-2zM36 224h2v3h-2zM38 226h2v3h-2zM40 227h2v3h-2zM42 229h2v3h-2zM44 230h2v3h-2zM46 231h2v3h-2zM48 233h2v3h-2zM50 234h2v3h-2zM52 236h2v3h-2zM54 237h2v3h-2zM56 238h2v3h-2zM58 240h2v3h-2zM60 241h2v3h-2zM62 243h2v3h-2z"/><path fill="#5e3618" fill-opacity="0.9" d="M32 225h2v1h-2zM34 227h2v1h-2zM36 227h2v1h-2zM38 229h2v1h-2zM40 230h2v1h-2zM42 232h2v1h-2zM44 233h2v1h-2zM46 234h2v1h-2zM48 236h2v1h-2zM50 237h2v1h-2zM52 239h2v1h-2zM54 240h2v1h-2zM56 241h2v1h-2zM58 243h2v1h-2zM60 244h2v1h-2zM62 246h2v1h-2z"/><path fill="#5e3618" fill-opacity="0.8" d="M32 237h2v1h-2zM34 239h2v1h-2zM36 239h2v1h-2zM38 241h2v1h-2zM40 242h2v1h-2zM42 244h2v1h-2zM44 245h2v1h-2zM46 246h2v1h-2zM48 248h2v1h-2zM50 249h2v1h-2zM52 251h2v1h-2zM54 252h2v1h-2zM56 253h2v1h-2z"/><path fill="#dcae74" fill-opacity="0.55" d="M50 251h2v1h-2zM56 252h2v1h-2zM37 248h2v1h-2zM56 245h2v1h-2zM43 232h2v1h-2zM54 245h2v1h-2zM56 237h1v1h-1zM48 226h2v1h-2zM42 252h2v1h-2zM38 247h2v1h-2zM38 244h1v1h-1zM52 252h1v1h-1z"/><path fill="#5e3618" fill-opacity="0.55" d="M41 243h1v1h-1zM60 247h1v1h-1zM37 239h2v1h-2zM44 248h2v1h-2zM44 244h1v1h-1zM43 251h2v1h-2z"/><path fill="#0c0c0c" d="M63 224h1v32h-1zM32 255h32v1h-32z"/><path fill="#b07a44" d="M64 224h31v31h-31z"/><path fill="#dcae74" fill-opacity="0.9" d="M64 224h31v4h-31z"/><path fill="#5e3618" fill-opacity="0.8" d="M64 228h31v1h-31z"/><path fill="#5e3618" fill-opacity="0.5" d="M64 253h31v2h-31z"/><path fill="#dcae74" fill-opacity="0.55" d="M67 240h1v1h-1zM82 237h1v1h-1zM93 229h2v1h-2zM85 236h2v1h-2zM90 235h1v1h-1zM85 239h1v1h-1zM77 252h1v1h-1z"/><path fill="#5e3618" fill-opacity="0.55" d="M90 243h2v1h-2zM75 228h1v1h-1zM69 245h2v1h-2z"/><path fill="#0c0c0c" d="M95 224h1v32h-1zM64 255h32v1h-32z"/><path fill="#b07a44" d="M96 224h31v31h-31z"/><path fill="#dcae74" fill-opacity="0.9" d="M96 224h31v4h-31z"/><path fill="#5e3618" fill-opacity="0.8" d="M96 228h31v1h-31z"/><path fill="#5e3618" fill-opacity="0.5" d="M96 253h31v2h-31z"/><path fill="#dcae74" fill-opacity="0.55" d="M124 242h2v1h-2zM110 230h1v1h-1zM98 251h1v1h-1zM107 232h1v1h-1zM116 253h2v1h-2z"/><path fill="#5e3618" fill-opacity="0.55" d="M106 237h2v1h-2zM110 248h1v1h-1zM97 226h1v1h-1zM115 231h1v1h-1zM101 241h1v1h-1z"/><path fill="#0c0c0c" d="M127 224h1v32h-1zM96 255h32v1h-32z"/><path fill="#b07a44" d="M128 224h31v31h-31z"/><path fill="#dcae74" fill-opacity="0.9" d="M128 224h31v4h-31z"/><path fill="#5e3618" fill-opacity="0.8" d="M128 228h31v1h-31z"/><path fill="#5e3618" fill-opacity="0.5" d="M128 253h31v2h-31z"/><path fill="#dcae74" fill-opacity="0.55" d="M144 238h1v1h-1zM130 246h1v1h-1zM156 245h1v1h-1zM135 243h2v1h-2z"/><path fill="#5e3618" fill-opacity="0.55" d="M154 234h1v1h-1zM156 237h1v1h-1zM137 245h1v1h-1zM133 226h2v1h-2zM143 240h1v1h-1zM135 244h2v1h-2z"/><path fill="#0c0c0c" d="M159 224h1v32h-1zM128 255h32v1h-32z"/><path fill="#b4804a" d="M160 224h31v31h-31z"/><path fill="#5e3618" d="M163 224h3v31h-3zM184 224h3v31h-3z"/><path fill="#dcae74" d="M163 226h24v3h-24z"/><path fill="#5a3418" d="M166 229h18v6h-18z"/><path fill="#dcae74" d="M163 236h24v3h-24z"/><path fill="#5a3418" d="M166 239h18v6h-18z"/><path fill="#dcae74" d="M163 246h24v3h-24z"/><path fill="#5a3418" d="M166 249h18v6h-18z"/><path fill="#0c0c0c" d="M191 224h1v32h-1zM160 255h32v1h-32z"/><path fill="#a06c3c" d="M0 256h31v31h-31z"/><path fill="#5e3618" fill-opacity="0.35" d="M5 256h1v31h-1zM13 256h1v31h-1zM21 256h1v31h-1zM27 256h1v31h-1z"/><path fill="#dcae74" fill-opacity="0.95" d="M0 260h2v3h-2zM2 261h2v3h-2zM4 262h2v3h-2zM6 264h2v3h-2zM8 265h2v3h-2zM10 267h2v3h-2zM12 268h2v3h-2zM14 269h2v3h-2zM16 271h2v3h-2zM18 272h2v3h-2zM20 274h2v3h-2zM22 275h2v3h-2zM24 276h2v3h-2zM26 278h2v3h-2zM28 279h2v3h-2zM30 281h2v3h-2z"/><path fill="#5e3618" fill-opacity="0.9" d="M0 263h2v1h-2zM2 264h2v1h-2zM4 265h2v1h-2zM6 267h2v1h-2zM8 268h2v1h-2zM10 270h2v1h-2zM12 271h2v1h-2zM14 272h2v1h-2zM16 274h2v1h-2zM18 275h2v1h-2zM20 277h2v1h-2zM22 278h2v1h-2zM24 279h2v1h-2zM26 281h2v1h-2zM28 282h2v1h-2zM30 284h2v1h-2z"/><path fill="#5e3618" fill-opacity="0.8" d="M0 275h2v1h-2zM2 276h2v1h-2zM4 277h2v1h-2zM6 279h2v1h-2zM8 280h2v1h-2zM10 282h2v1h-2zM12 283h2v1h-2zM14 284h2v1h-2zM16 286h2v1h-2z"/><path fill="#dcae74" fill-opacity="0.55" d="M11 284h1v1h-1zM24 281h1v1h-1zM27 261h1v1h-1zM28 266h1v1h-1zM12 259h1v1h-1zM29 271h1v1h-1zM5 263h2v1h-2zM29 259h2v1h-2z"/><path fill="#5e3618" fill-opacity="0.55" d="M5 276h1v1h-1zM13 285h1v1h-1zM14 263h2v1h-2zM12 283h1v1h-1zM28 284h2v1h-2zM14 281h2v1h-2zM27 279h1v1h-1zM26 285h2v1h-2zM22 270h2v1h-2zM1 256h2v1h-2z"/><path fill="#0c0c0c" d="M31 256h1v32h-1zM0 287h32v1h-32z"/><path fill="#9c6834" d="M32 256h31v31h-31z"/><path fill="#5e3618" fill-opacity="0.35" d="M37 256h1v31h-1zM45 256h1v31h-1zM53 256h1v31h-1zM59 256h1v31h-1z"/><path fill="#dcae74" fill-opacity="0.95" d="M32 256h2v1h-2zM34 256h2v3h-2zM36 256h2v3h-2zM38 258h2v3h-2zM40 259h2v3h-2zM42 261h2v3h-2zM44 262h2v3h-2zM46 263h2v3h-2zM48 265h2v3h-2zM50 266h2v3h-2zM52 268h2v3h-2zM54 269h2v3h-2zM56 270h2v3h-2zM58 272h2v3h-2zM60 273h2v3h-2zM62 275h2v3h-2z"/><path fill="#5e3618" fill-opacity="0.9" d="M32 257h2v1h-2zM34 259h2v1h-2zM36 259h2v1h-2zM38 261h2v1h-2zM40 262h2v1h-2zM42 264h2v1h-2zM44 265h2v1h-2zM46 266h2v1h-2zM48 268h2v1h-2zM50 269h2v1h-2zM52 271h2v1h-2zM54 272h2v1h-2zM56 273h2v1h-2zM58 275h2v1h-2zM60 276h2v1h-2zM62 278h2v1h-2z"/><path fill="#5e3618" fill-opacity="0.8" d="M32 269h2v1h-2zM34 271h2v1h-2zM36 271h2v1h-2zM38 273h2v1h-2zM40 274h2v1h-2zM42 276h2v1h-2zM44 277h2v1h-2zM46 278h2v1h-2zM48 280h2v1h-2zM50 281h2v1h-2zM52 283h2v1h-2zM54 284h2v1h-2zM56 285h2v1h-2z"/><path fill="#dcae74" fill-opacity="0.55" d="M59 265h2v1h-2zM59 285h2v1h-2zM55 258h2v1h-2zM62 258h2v1h-2zM53 276h2v1h-2zM48 270h2v1h-2zM45 274h2v1h-2zM48 273h2v1h-2z"/><path fill="#5e3618" fill-opacity="0.55" d="M34 261h2v1h-2zM44 257h2v1h-2zM59 273h2v1h-2zM41 273h2v1h-2zM40 258h1v1h-1zM48 286h1v1h-1zM38 263h2v1h-2zM57 286h1v1h-1zM53 276h1v1h-1zM49 268h2v1h-2z"/><path fill="#0c0c0c" d="M63 256h1v32h-1zM32 287h32v1h-32z"/><path fill="#a06c3c" d="M64 256h31v31h-31z"/><path fill="#5e3618" fill-opacity="0.35" d="M69 256h1v31h-1zM77 256h1v31h-1zM85 256h1v31h-1zM91 256h1v31h-1z"/><path fill="#dcae74" fill-opacity="0.95" d="M64 260h2v3h-2zM66 261h2v3h-2zM68 262h2v3h-2zM70 264h2v3h-2zM72 265h2v3h-2zM74 267h2v3h-2zM76 268h2v3h-2zM78 269h2v3h-2zM80 271h2v3h-2zM82 272h2v3h-2zM84 274h2v3h-2zM86 275h2v3h-2zM88 276h2v3h-2zM90 278h2v3h-2zM92 279h2v3h-2zM94 281h2v3h-2z"/><path fill="#5e3618" fill-opacity="0.9" d="M64 263h2v1h-2zM66 264h2v1h-2zM68 265h2v1h-2zM70 267h2v1h-2zM72 268h2v1h-2zM74 270h2v1h-2zM76 271h2v1h-2zM78 272h2v1h-2zM80 274h2v1h-2zM82 275h2v1h-2zM84 277h2v1h-2zM86 278h2v1h-2zM88 279h2v1h-2zM90 281h2v1h-2zM92 282h2v1h-2zM94 284h2v1h-2z"/><path fill="#5e3618" fill-opacity="0.8" d="M64 275h2v1h-2zM66 276h2v1h-2zM68 277h2v1h-2zM70 279h2v1h-2zM72 280h2v1h-2zM74 282h2v1h-2zM76 283h2v1h-2zM78 284h2v1h-2zM80 286h2v1h-2z"/><path fill="#dcae74" fill-opacity="0.55" d="M90 275h2v1h-2zM66 285h2v1h-2zM67 274h2v1h-2zM87 284h2v1h-2zM73 258h1v1h-1zM77 272h2v1h-2zM76 283h2v1h-2zM69 282h1v1h-1zM67 277h2v1h-2zM93 286h2v1h-2zM73 267h1v1h-1z"/><path fill="#5e3618" fill-opacity="0.55" d="M72 278h2v1h-2zM71 270h2v1h-2zM70 278h2v1h-2zM70 279h1v1h-1zM68 280h1v1h-1zM91 269h2v1h-2zM82 264h2v1h-2z"/><path fill="#0c0c0c" d="M95 256h1v32h-1zM64 287h32v1h-32z"/><path fill="#cc9a62" d="M96 256h31v31h-31z"/><path fill="#a06c3c" fill-opacity="0.35" d="M101 256h1v31h-1zM109 256h1v31h-1zM117 256h1v31h-1zM123 256h1v31h-1z"/><path fill="#dcae74" fill-opacity="0.95" d="M96 262h2v3h-2zM98 263h2v3h-2zM100 264h2v3h-2zM102 266h2v3h-2zM104 267h2v3h-2zM106 269h2v3h-2zM108 270h2v3h-2zM110 271h2v3h-2zM112 273h2v3h-2zM114 274h2v3h-2zM116 276h2v3h-2zM118 277h2v3h-2zM120 278h2v3h-2zM122 280h2v3h-2zM124 281h2v3h-2zM126 283h2v3h-2z"/><path fill="#a06c3c" fill-opacity="0.9" d="M96 265h2v1h-2zM98 266h2v1h-2zM100 267h2v1h-2zM102 269h2v1h-2zM104 270h2v1h-2zM106 272h2v1h-2zM108 273h2v1h-2zM110 274h2v1h-2zM112 276h2v1h-2zM114 277h2v1h-2zM116 279h2v1h-2zM118 280h2v1h-2zM120 281h2v1h-2zM122 283h2v1h-2zM124 284h2v1h-2zM126 286h2v1h-2z"/><path fill="#a06c3c" fill-opacity="0.8" d="M96 277h2v1h-2zM98 278h2v1h-2zM100 279h2v1h-2zM102 281h2v1h-2zM104 282h2v1h-2zM106 284h2v1h-2zM108 285h2v1h-2zM110 286h2v1h-2z"/><path fill="#dcae74" fill-opacity="0.55" d="M96 262h2v1h-2zM124 257h2v1h-2zM96 258h1v1h-1zM108 256h2v1h-2zM105 270h1v1h-1zM103 260h2v1h-2zM99 258h1v1h-1zM106 266h2v1h-2zM97 269h1v1h-1zM106 259h2v1h-2zM106 284h1v1h-1z"/><path fill="#a06c3c" fill-opacity="0.55" d="M114 271h1v1h-1zM103 283h1v1h-1zM118 263h2v1h-2zM122 282h2v1h-2zM126 282h2v1h-2zM101 270h1v1h-1zM101 267h1v1h-1z"/><path fill="#0c0c0c" d="M127 256h1v32h-1zM96 287h32v1h-32z"/><path fill="#9c6834" d="M128 256h31v31h-31z"/><path fill="#5e3618" fill-opacity="0.35" d="M133 256h1v31h-1zM141 256h1v31h-1zM149 256h1v31h-1zM155 256h1v31h-1z"/><path fill="#dcae74" fill-opacity="0.95" d="M128 256h2v1h-2zM130 256h2v3h-2zM132 256h2v3h-2zM134 258h2v3h-2zM136 259h2v3h-2zM138 261h2v3h-2zM140 262h2v3h-2zM142 263h2v3h-2zM144 265h2v3h-2zM146 266h2v3h-2zM148 268h2v3h-2zM150 269h2v3h-2zM152 270h2v3h-2zM154 272h2v3h-2zM156 273h2v3h-2zM158 275h2v3h-2z"/><path fill="#5e3618" fill-opacity="0.9" d="M128 257h2v1h-2zM130 259h2v1h-2zM132 259h2v1h-2zM134 261h2v1h-2zM136 262h2v1h-2zM138 264h2v1h-2zM140 265h2v1h-2zM142 266h2v1h-2zM144 268h2v1h-2zM146 269h2v1h-2zM148 271h2v1h-2zM150 272h2v1h-2zM152 273h2v1h-2zM154 275h2v1h-2zM156 276h2v1h-2zM158 278h2v1h-2z"/><path fill="#5e3618" fill-opacity="0.8" d="M128 269h2v1h-2zM130 271h2v1h-2zM132 271h2v1h-2zM134 273h2v1h-2zM136 274h2v1h-2zM138 276h2v1h-2zM140 277h2v1h-2zM142 278h2v1h-2zM144 280h2v1h-2zM146 281h2v1h-2zM148 283h2v1h-2zM150 284h2v1h-2zM152 285h2v1h-2z"/><path fill="#dcae74" fill-opacity="0.55" d="M158 260h2v1h-2zM147 270h2v1h-2zM148 279h1v1h-1zM155 261h2v1h-2zM135 281h2v1h-2zM129 267h2v1h-2zM146 270h1v1h-1zM150 278h1v1h-1zM142 265h1v1h-1zM131 272h2v1h-2z"/><path fill="#5e3618" fill-opacity="0.55" d="M140 258h1v1h-1zM130 284h1v1h-1zM157 276h1v1h-1zM155 260h1v1h-1zM138 281h1v1h-1zM139 266h2v1h-2zM136 274h2v1h-2zM158 267h1v1h-1z"/><path fill="#0c0c0c" d="M159 256h1v32h-1zM128 287h32v1h-32z"/><path fill="#ab7540" d="M160 256h31v31h-31z"/><path fill="#dcae74" fill-opacity="0.9" d="M160 262h31v4h-31z"/><path fill="#5e3618" d="M160 266h31v1h-31z"/><path fill="#0c0c0c" d="M191 256h1v32h-1zM160 287h32v1h-32z"/><path fill="#a06c3c" d="M0 288h31v31h-31z"/><path fill="#dcae74" d="M0 288h31v4h-31zM0 288h3v31h-3z"/><path fill="#a06a38" d="M3 292h28v27h-28z"/><path fill="#0c0c0c" d="M31 288h1v32h-1zM0 319h32v1h-32z"/><path fill="#cc9a62" d="M32 288h31v31h-31z"/><path fill="#a06c3c" fill-opacity="0.9" d="M35 288h2v31h-2zM43 288h2v31h-2zM51 288h2v31h-2zM59 288h2v31h-2z"/><path fill="#dcae74" fill-opacity="0.45" d="M37 288h2v31h-2zM45 288h2v31h-2zM53 288h2v31h-2zM61 288h2v31h-2z"/><path fill="#dcae74" fill-opacity="0.55" d="M39 297h2v1h-2zM37 307h2v1h-2zM36 298h2v1h-2zM48 294h2v1h-2zM45 316h1v1h-1zM56 291h1v1h-1zM47 302h2v1h-2zM45 290h1v1h-1zM42 307h2v1h-2zM62 296h1v1h-1z"/><path fill="#a06c3c" fill-opacity="0.55" d="M42 309h1v1h-1zM33 314h2v1h-2zM39 315h1v1h-1zM41 294h2v1h-2zM55 290h1v1h-1zM37 315h2v1h-2zM33 300h1v1h-1zM58 304h2v1h-2z"/><path fill="#0c0c0c" d="M63 288h1v32h-1zM32 319h32v1h-32z"/><path fill="#b4804a" d="M64 288h31v31h-31z"/><path fill="#5e3618" fill-opacity="0.85" d="M68 288h2v31h-2zM74 288h2v31h-2zM80 288h2v31h-2zM86 288h2v31h-2zM92 288h2v31h-2z"/><path fill="#dcae74" fill-opacity="0.55" d="M70 288h2v31h-2zM76 288h2v31h-2zM82 288h2v31h-2zM88 288h2v31h-2zM94 288h2v31h-2z"/><path fill="#dcae74" fill-opacity="0.95" d="M64 310h2v4h-2zM66 308h2v4h-2zM68 307h2v4h-2zM70 306h2v4h-2zM72 304h2v4h-2zM74 303h2v4h-2zM76 302h2v4h-2zM78 300h2v4h-2zM80 299h2v4h-2zM82 298h2v4h-2zM84 297h2v4h-2zM86 295h2v4h-2zM88 294h2v4h-2zM90 293h2v4h-2zM92 291h2v4h-2zM94 290h2v4h-2z"/><path fill="#5e3618" fill-opacity="0.9" d="M64 314h2v1h-2zM66 312h2v1h-2zM68 311h2v1h-2zM70 310h2v1h-2zM72 308h2v1h-2zM74 307h2v1h-2zM76 306h2v1h-2zM78 304h2v1h-2zM80 303h2v1h-2zM82 302h2v1h-2zM84 301h2v1h-2zM86 299h2v1h-2zM88 298h2v1h-2zM90 297h2v1h-2zM92 295h2v1h-2zM94 294h2v1h-2z"/><path fill="#dcae74" fill-opacity="0.55" d="M75 288h1v1h-1zM69 292h1v1h-1zM74 312h2v1h-2zM64 294h1v1h-1zM90 307h2v1h-2zM84 307h1v1h-1z"/><path fill="#5e3618" fill-opacity="0.55" d="M66 301h1v1h-1zM94 310h2v1h-2zM79 302h2v1h-2zM74 312h1v1h-1z"/><path fill="#0c0c0c" d="M95 288h1v32h-1zM64 319h32v1h-32z"/><path fill="#b4804a" d="M96 288h31v31h-31z"/><path fill="#5e3618" fill-opacity="0.85" d="M100 288h2v31h-2zM106 288h2v31h-2zM112 288h2v31h-2zM118 288h2v31h-2zM124 288h2v31h-2z"/><path fill="#dcae74" fill-opacity="0.55" d="M102 288h2v31h-2zM108 288h2v31h-2zM114 288h2v31h-2zM120 288h2v31h-2zM126 288h2v31h-2z"/><path fill="#dcae74" fill-opacity="0.95" d="M96 310h2v4h-2zM98 308h2v4h-2zM100 307h2v4h-2zM102 306h2v4h-2zM104 304h2v4h-2zM106 303h2v4h-2zM108 302h2v4h-2zM110 300h2v4h-2zM112 299h2v4h-2zM114 298h2v4h-2zM116 297h2v4h-2zM118 295h2v4h-2zM120 294h2v4h-2zM122 293h2v4h-2zM124 291h2v4h-2zM126 290h2v4h-2z"/><path fill="#5e3618" fill-opacity="0.9" d="M96 314h2v1h-2zM98 312h2v1h-2zM100 311h2v1h-2zM102 310h2v1h-2zM104 308h2v1h-2zM106 307h2v1h-2zM108 306h2v1h-2zM110 304h2v1h-2zM112 303h2v1h-2zM114 302h2v1h-2zM116 301h2v1h-2zM118 299h2v1h-2zM120 298h2v1h-2zM122 297h2v1h-2zM124 295h2v1h-2zM126 294h2v1h-2z"/><path fill="#dcae74" fill-opacity="0.55" d="M96 296h2v1h-2zM113 296h1v1h-1zM104 317h1v1h-1zM116 298h1v1h-1zM96 288h2v1h-2z"/><path fill="#5e3618" fill-opacity="0.55" d="M106 299h1v1h-1zM112 291h2v1h-2zM105 302h2v1h-2zM104 297h1v1h-1zM111 294h2v1h-2z"/><path fill="#0c0c0c" d="M127 288h1v32h-1zM96 319h32v1h-32z"/><path fill="#cc9a62" d="M128 288h31v31h-31z"/><path fill="#a06c3c" fill-opacity="0.35" d="M133 288h1v31h-1zM141 288h1v31h-1zM149 288h1v31h-1zM155 288h1v31h-1z"/><path fill="#dcae74" fill-opacity="0.95" d="M128 294h2v3h-2zM130 295h2v3h-2zM132 296h2v3h-2zM134 298h2v3h-2zM136 299h2v3h-2zM138 301h2v3h-2zM140 302h2v3h-2zM142 303h2v3h-2zM144 305h2v3h-2zM146 306h2v3h-2zM148 308h2v3h-2zM150 309h2v3h-2zM152 310h2v3h-2zM154 312h2v3h-2zM156 313h2v3h-2zM158 315h2v3h-2z"/><path fill="#a06c3c" fill-opacity="0.9" d="M128 297h2v1h-2zM130 298h2v1h-2zM132 299h2v1h-2zM134 301h2v1h-2zM136 302h2v1h-2zM138 304h2v1h-2zM140 305h2v1h-2zM142 306h2v1h-2zM144 308h2v1h-2zM146 309h2v1h-2zM148 311h2v1h-2zM150 312h2v1h-2zM152 313h2v1h-2zM154 315h2v1h-2zM156 316h2v1h-2zM158 318h2v1h-2z"/><path fill="#a06c3c" fill-opacity="0.8" d="M128 309h2v1h-2zM130 310h2v1h-2zM132 311h2v1h-2zM134 313h2v1h-2zM136 314h2v1h-2zM138 316h2v1h-2zM140 317h2v1h-2zM142 318h2v1h-2z"/><path fill="#dcae74" fill-opacity="0.55" d="M137 309h2v1h-2zM148 306h1v1h-1zM146 308h2v1h-2zM150 291h2v1h-2zM133 316h1v1h-1zM153 311h1v1h-1zM134 309h2v1h-2zM139 308h2v1h-2zM139 292h2v1h-2z"/><path fill="#a06c3c" fill-opacity="0.55" d="M140 296h2v1h-2zM141 304h1v1h-1zM135 292h2v1h-2zM134 297h2v1h-2zM158 298h1v1h-1zM128 307h2v1h-2zM141 318h1v1h-1zM149 302h2v1h-2zM145 308h1v1h-1z"/><path fill="#0c0c0c" d="M159 288h1v32h-1zM128 319h32v1h-32z"/><path fill="#94602e" d="M160 288h31v31h-31z"/><path fill="#5e3618" d="M160 294h31v1h-31z"/><path fill="#dcae74" fill-opacity="0.55" d="M180 317h2v1h-2z"/><path fill="#5e3618" fill-opacity="0.55" d="M173 307h2v1h-2zM182 302h1v1h-1zM160 301h2v1h-2zM187 307h2v1h-2zM189 302h2v1h-2zM168 293h1v1h-1zM161 315h2v1h-2zM176 302h2v1h-2zM186 288h1v1h-1z"/><path fill="#0c0c0c" d="M191 288h1v32h-1zM160 319h32v1h-32z"/><path fill="#cc9a62" d="M0 320h31v31h-31z"/><path fill="#a06c3c" fill-opacity="0.9" d="M3 320h2v31h-2zM11 320h2v31h-2zM19 320h2v31h-2zM27 320h2v31h-2z"/><path fill="#dcae74" fill-opacity="0.45" d="M5 320h2v31h-2zM13 320h2v31h-2zM21 320h2v31h-2zM29 320h2v31h-2z"/><path fill="#dcae74" fill-opacity="0.55" d="M20 334h2v1h-2zM18 332h1v1h-1zM10 332h2v1h-2zM6 340h2v1h-2zM7 347h1v1h-1zM24 322h2v1h-2zM14 329h1v1h-1zM1 335h1v1h-1zM2 327h2v1h-2zM23 334h1v1h-1zM30 350h1v1h-1zM22 335h2v1h-2zM13 330h1v1h-1zM3 320h2v1h-2zM11 328h1v1h-1z"/><path fill="#a06c3c" fill-opacity="0.55" d="M25 350h1v1h-1zM15 348h1v1h-1zM12 342h2v1h-2z"/><path fill="#0c0c0c" d="M31 320h1v32h-1zM0 351h32v1h-32z"/><path fill="#cc9a62" d="M32 320h31v31h-31z"/><path fill="#a06c3c" fill-opacity="0.9" d="M35 320h2v31h-2zM43 320h2v31h-2zM51 320h2v31h-2zM59 320h2v31h-2z"/><path fill="#dcae74" fill-opacity="0.45" d="M37 320h2v31h-2zM45 320h2v31h-2zM53 320h2v31h-2zM61 320h2v31h-2z"/><path fill="#dcae74" fill-opacity="0.55" d="M49 322h2v1h-2zM52 334h1v1h-1zM52 330h2v1h-2zM50 322h2v1h-2zM41 343h1v1h-1zM32 350h1v1h-1zM48 347h2v1h-2zM35 350h1v1h-1zM38 337h2v1h-2z"/><path fill="#a06c3c" fill-opacity="0.55" d="M49 331h1v1h-1zM32 329h2v1h-2zM36 329h2v1h-2zM39 346h2v1h-2zM48 331h1v1h-1zM52 339h2v1h-2zM55 343h2v1h-2zM62 345h2v1h-2zM56 326h2v1h-2z"/><path fill="#0c0c0c" d="M63 320h1v32h-1zM32 351h32v1h-32z"/><path fill="#b4804a" d="M64 320h31v31h-31z"/><path fill="#5e3618" fill-opacity="0.85" d="M68 320h2v31h-2zM74 320h2v31h-2zM80 320h2v31h-2zM86 320h2v31h-2zM92 320h2v31h-2z"/><path fill="#dcae74" fill-opacity="0.55" d="M70 320h2v31h-2zM76 320h2v31h-2zM82 320h2v31h-2zM88 320h2v31h-2zM94 320h2v31h-2z"/><path fill="#dcae74" fill-opacity="0.95" d="M64 342h2v4h-2zM66 340h2v4h-2zM68 339h2v4h-2zM70 338h2v4h-2zM72 336h2v4h-2zM74 335h2v4h-2zM76 334h2v4h-2zM78 332h2v4h-2zM80 331h2v4h-2zM82 330h2v4h-2zM84 329h2v4h-2zM86 327h2v4h-2zM88 326h2v4h-2zM90 325h2v4h-2zM92 323h2v4h-2zM94 322h2v4h-2z"/><path fill="#5e3618" fill-opacity="0.9" d="M64 346h2v1h-2zM66 344h2v1h-2zM68 343h2v1h-2zM70 342h2v1h-2zM72 340h2v1h-2zM74 339h2v1h-2zM76 338h2v1h-2zM78 336h2v1h-2zM80 335h2v1h-2zM82 334h2v1h-2zM84 333h2v1h-2zM86 331h2v1h-2zM88 330h2v1h-2zM90 329h2v1h-2zM92 327h2v1h-2zM94 326h2v1h-2z"/><path fill="#dcae74" fill-opacity="0.55" d="M88 320h2v1h-2zM88 346h1v1h-1zM91 333h2v1h-2zM76 350h2v1h-2zM81 332h2v1h-2z"/><path fill="#5e3618" fill-opacity="0.55" d="M74 330h1v1h-1zM87 334h1v1h-1zM74 337h2v1h-2zM93 329h1v1h-1zM81 337h1v1h-1z"/><path fill="#0c0c0c" d="M95 320h1v32h-1zM64 351h32v1h-32z"/><path fill="#b4804a" d="M96 320h31v31h-31z"/><path fill="#5e3618" fill-opacity="0.85" d="M100 320h2v31h-2zM106 320h2v31h-2zM112 320h2v31h-2zM118 320h2v31h-2zM124 320h2v31h-2z"/><path fill="#dcae74" fill-opacity="0.55" d="M102 320h2v31h-2zM108 320h2v31h-2zM114 320h2v31h-2zM120 320h2v31h-2zM126 320h2v31h-2z"/><path fill="#dcae74" fill-opacity="0.95" d="M96 342h2v4h-2zM98 340h2v4h-2zM100 339h2v4h-2zM102 338h2v4h-2zM104 336h2v4h-2zM106 335h2v4h-2zM108 334h2v4h-2zM110 332h2v4h-2zM112 331h2v4h-2zM114 330h2v4h-2zM116 329h2v4h-2zM118 327h2v4h-2zM120 326h2v4h-2zM122 325h2v4h-2zM124 323h2v4h-2zM126 322h2v4h-2z"/><path fill="#5e3618" fill-opacity="0.9" d="M96 346h2v1h-2zM98 344h2v1h-2zM100 343h2v1h-2zM102 342h2v1h-2zM104 340h2v1h-2zM106 339h2v1h-2zM108 338h2v1h-2zM110 336h2v1h-2zM112 335h2v1h-2zM114 334h2v1h-2zM116 333h2v1h-2zM118 331h2v1h-2zM120 330h2v1h-2zM122 329h2v1h-2zM124 327h2v1h-2zM126 326h2v1h-2z"/><path fill="#dcae74" fill-opacity="0.55" d="M122 331h2v1h-2zM120 338h2v1h-2zM114 348h1v1h-1zM121 345h2v1h-2zM121 346h2v1h-2zM116 340h2v1h-2zM100 330h2v1h-2z"/><path fill="#5e3618" fill-opacity="0.55" d="M111 350h1v1h-1zM102 327h2v1h-2zM125 326h1v1h-1z"/><path fill="#0c0c0c" d="M127 320h1v32h-1zM96 351h32v1h-32z"/><path fill="#cc9a62" d="M128 320h31v31h-31z"/><path fill="#a06c3c" fill-opacity="0.9" d="M130 320h2v31h-2z"/><path fill="#dcae74" fill-opacity="0.45" d="M132 320h2v31h-2z"/><path fill="#dcae74" fill-opacity="0.55" d="M144 333h1v1h-1zM147 325h2v1h-2zM138 327h2v1h-2zM129 328h1v1h-1zM155 339h1v1h-1zM158 347h1v1h-1zM143 328h1v1h-1zM129 325h1v1h-1zM144 332h1v1h-1zM148 350h2v1h-2zM151 328h2v1h-2zM146 350h1v1h-1z"/><path fill="#a06c3c" fill-opacity="0.55" d="M155 338h1v1h-1zM147 349h2v1h-2zM148 323h1v1h-1zM128 328h2v1h-2zM154 334h2v1h-2zM150 332h1v1h-1z"/><path fill="#3a3a40" d="M128 325h15v27h-15z"/><path fill="#b4b4bc" d="M129 326h13v25h-13z"/><path fill="#78787e" fill-opacity="0.9" d="M129 326h13v1h-13zM129 328h13v1h-13zM129 330h13v1h-13zM129 332h13v1h-13zM129 334h13v1h-13zM129 336h13v1h-13zM129 338h13v1h-13zM129 340h13v1h-13zM129 342h13v1h-13zM129 344h13v1h-13zM129 346h13v1h-13zM129 348h13v1h-13zM129 350h13v1h-13z"/><path fill="#e8e8f0" fill-opacity="0.6" d="M130 326h2v25h-2z"/><path fill="#0c0c0c" d="M159 320h1v32h-1zM128 351h32v1h-32z"/><path fill="#cc9a62" d="M160 320h31v31h-31z"/><path fill="#a06c3c" fill-opacity="0.35" d="M165 320h1v31h-1zM173 320h1v31h-1zM181 320h1v31h-1zM187 320h1v31h-1z"/><path fill="#dcae74" fill-opacity="0.95" d="M160 320h2v3h-2zM162 321h2v3h-2zM164 322h2v3h-2zM166 324h2v3h-2zM168 325h2v3h-2zM170 327h2v3h-2zM172 328h2v3h-2zM174 329h2v3h-2zM176 331h2v3h-2zM178 332h2v3h-2zM180 334h2v3h-2zM182 335h2v3h-2zM184 336h2v3h-2zM186 338h2v3h-2zM188 339h2v3h-2zM190 341h2v3h-2z"/><path fill="#a06c3c" fill-opacity="0.9" d="M160 323h2v1h-2zM162 324h2v1h-2zM164 325h2v1h-2zM166 327h2v1h-2zM168 328h2v1h-2zM170 330h2v1h-2zM172 331h2v1h-2zM174 332h2v1h-2zM176 334h2v1h-2zM178 335h2v1h-2zM180 337h2v1h-2zM182 338h2v1h-2zM184 339h2v1h-2zM186 341h2v1h-2zM188 342h2v1h-2zM190 344h2v1h-2z"/><path fill="#a06c3c" fill-opacity="0.8" d="M160 335h2v1h-2zM162 336h2v1h-2zM164 337h2v1h-2zM166 339h2v1h-2zM168 340h2v1h-2zM170 342h2v1h-2zM172 343h2v1h-2zM174 344h2v1h-2zM176 346h2v1h-2zM178 347h2v1h-2zM180 349h2v1h-2zM182 350h2v1h-2z"/><path fill="#dcae74" fill-opacity="0.55" d="M188 349h2v1h-2zM180 340h1v1h-1zM169 339h1v1h-1zM170 335h1v1h-1zM188 336h2v1h-2zM166 348h1v1h-1zM165 329h2v1h-2z"/><path fill="#a06c3c" fill-opacity="0.55" d="M171 350h1v1h-1zM186 344h1v1h-1zM164 342h2v1h-2zM176 338h2v1h-2zM160 339h2v1h-2zM189 337h1v1h-1zM160 335h1v1h-1zM162 334h2v1h-2zM163 350h1v1h-1zM162 336h1v1h-1zM182 325h1v1h-1z"/><path fill="#50545c" fill-opacity="0.9" d="M164 332h27v1h-27z"/><path fill="#50545c" d="M180 340h11v1h-11z"/><path fill="#0c0c0c" d="M191 320h1v32h-1zM160 351h32v1h-32z"/><path fill="#2a1404" fill-opacity=".13" d="M128 32h64v32h-64zM0 64h192v288h-192z"/><use href="#n9" x="0" y="0"/><use href="#n9" x="32" y="0"/><use href="#n10" x="64" y="0"/><use href="#n1" x="96" y="0"/><use href="#n9" x="128" y="0"/><use href="#n1" x="160" y="0"/><use href="#n1" x="0" y="32"/><use href="#n1" x="32" y="32"/><use href="#n1" x="64" y="32"/><use href="#n1" x="96" y="32"/><use href="#n1" x="128" y="32"/><use href="#n1" x="160" y="32"/><use href="#n1" x="0" y="64"/><use href="#n1" x="32" y="64"/><use href="#n1" x="64" y="64"/><use href="#n1" x="96" y="64"/><use href="#n1" x="128" y="64"/><use href="#n1" x="160" y="64"/><use href="#n1" x="0" y="96"/><use href="#n1" x="32" y="96"/><use href="#n1" x="64" y="96"/><use href="#n1" x="96" y="96"/><use href="#n1" x="128" y="96"/><use href="#n1" x="160" y="96"/><use href="#n1" x="0" y="128"/><use href="#n1" x="32" y="128"/><use href="#n1" x="64" y="128"/><use href="#n1" x="96" y="128"/><use href="#n1" x="128" y="128"/><use href="#n1" x="160" y="128"/><use href="#n1" x="0" y="160"/><use href="#n1" x="32" y="160"/><use href="#n1" x="64" y="160"/><use href="#n1" x="96" y="160"/><use href="#n1" x="128" y="160"/><use href="#n1" x="160" y="160"/><use href="#n1" x="0" y="192"/><use href="#n1" x="32" y="192"/><use href="#n1" x="64" y="192"/><use href="#n1" x="96" y="192"/><use href="#n1" x="128" y="192"/><use href="#n1" x="160" y="192"/><use href="#n1" x="0" y="224"/><use href="#n1" x="32" y="224"/><use href="#n1" x="64" y="224"/><use href="#n1" x="96" y="224"/><use href="#n1" x="128" y="224"/><use href="#n1" x="160" y="224"/><use href="#n1" x="0" y="256"/><use href="#n1" x="32" y="256"/><use href="#n1" x="64" y="256"/><use href="#n1" x="96" y="256"/><use href="#n1" x="128" y="256"/><use href="#n1" x="160" y="256"/><use href="#n1" x="0" y="288"/><use href="#n1" x="32" y="288"/><use href="#n1" x="64" y="288"/><use href="#n1" x="96" y="288"/><use href="#n1" x="128" y="288"/><use href="#n1" x="160" y="288"/><use href="#n1" x="0" y="320"/><use href="#n1" x="32" y="320"/><use href="#n1" x="64" y="320"/><use href="#n1" x="96" y="320"/><use href="#n1" x="128" y="320"/><use href="#n1" x="160" y="320"/></svg></div>
<div class="a" style="left:592px;top:184px;width:17px;height:352px;background:#f3f3f3"></div>
<div class="a" style="left:598px;top:192px;width:0;height:0;border-left:3.5px solid transparent;border-right:3.5px solid transparent;border-bottom:4px solid #303030"></div>
<div class="a" style="left:593px;top:203px;width:15px;height:128px;border:1px solid #9a9a9a;border-radius:2px;background:linear-gradient(90deg,#f4f4f4,#e6e6e6 50%,#d4d4d4)"><div class="a" style="left:4px;top:59px;width:6px;height:7px;background:repeating-linear-gradient(180deg,#5a5a5a 0 1px,transparent 1px 3px)"></div></div>
<div class="a" style="left:598px;top:525px;width:0;height:0;border-left:3.5px solid transparent;border-right:3.5px solid transparent;border-top:4px solid #303030"></div>
<div class="a group" style="left:622px;top:185px;width:168px;height:353px"></div>
<div class="a sunken" style="left:631px;top:194px;width:151px;height:325px;background:#fff"></div>
<div class="a" style="left:633px;top:196px;width:148px;height:14px;background:#3399ff"></div>
<div class="a raised" style="left:614px;top:594px;width:87px;height:25px"></div>
<div class="a raised" style="left:710px;top:594px;width:87px;height:25px"></div>
<div class="a raised" style="left:806px;top:594px;width:87px;height:25px"></div>
<div class="a raised" style="left:902px;top:594px;width:87px;height:25px"></div>
<svg class="a" style="left:20px;top:598px" width="17" height="16" viewBox="0 0 17 16"><path d="M5.5 12 V2.5 L14.5 1 V11" fill="none" stroke="#000" stroke-width="1.8"/><path d="M5.5 4.6 L14.5 3.2" stroke="#000" stroke-width="1.6"/><ellipse cx="4" cy="12.6" rx="2.3" ry="1.8" fill="#f4d000" stroke="#000" stroke-width="0.9"/><ellipse cx="13" cy="11.2" rx="2.3" ry="1.8" fill="#f04818" stroke="#000" stroke-width="0.9"/></svg>
<span id="title" class="t" style="left:8.00px;top:8px;letter-spacing:0.00px;font-size:12px;-webkit-text-stroke:0">Database</span>
<span id="tb_terms" class="t" style="left:108.90px;top:44px;letter-spacing:0.65px;">Terms</span>
<span id="tb_system" class="t" style="left:329.50px;top:44px;letter-spacing:0.78px;">System</span>
<span id="tb_system2" class="t" style="left:557.00px;top:44px;letter-spacing:0.67px;">System 2</span>
<span id="tb_common" class="t" style="left:797.80px;top:44px;letter-spacing:0.50px;">Common Events</span>
<span id="tb_actors" class="t" style="left:28.90px;top:63px;letter-spacing:0.34px;">Actors</span>
<span id="tb_classes" class="t" style="left:90.00px;top:63px;letter-spacing:0.63px;">Classes</span>
<span id="tb_skills" class="t" style="left:162.70px;top:63px;letter-spacing:0.10px;">Skills</span>
<span id="tb_items" class="t" style="left:221.40px;top:63px;letter-spacing:1.15px;">Items</span>
<span id="tb_enemies" class="t" style="left:280.10px;top:63px;letter-spacing:0.60px;">Enemies</span>
<span id="tb_troops" class="t" style="left:356.10px;top:63px;letter-spacing:0.86px;">Troops</span>
<span id="tb_elements" class="t" style="left:421.80px;top:63px;letter-spacing:0.67px;">Elements</span>
<span id="tb_states" class="t" style="left:502.80px;top:63px;letter-spacing:0.82px;">States</span>
<span id="tb_anim" class="t" style="left:565.10px;top:63px;letter-spacing:0.57px;">Animations</span>
<span id="tb_anim2" class="t" style="left:657.00px;top:63px;letter-spacing:0.54px;">Animations 2</span>
<span id="tb_battle" class="t" style="left:759.10px;top:63px;letter-spacing:0.63px;">Battle Screen</span>
<span id="tb_terrain" class="t" style="left:865.20px;top:63px;letter-spacing:0.97px;">Terrain</span>
<span id="tb_tilesets" class="t" style="left:931.90px;top:61px;letter-spacing:0.53px;">Tilesets</span>
<span id="l1" class="t" style="left:31.50px;top:118px;letter-spacing:0.64px;">0001:Basic</span>
<span id="l2" class="t" style="left:31.50px;top:132px;letter-spacing:0.76px;">0002:Exterior</span>
<span id="l3" class="t" style="left:31.50px;top:146px;letter-spacing:0.92px;">0003:Interior</span>
<span id="l4" class="t" style="left:31.50px;top:160px;letter-spacing:0.86px;">0004:Dungeon</span>
<span id="l5" class="t" style="left:31.50px;top:174px;letter-spacing:0.72px;color:#fff">0005:Ship</span>
<span id="maxnum" class="t" style="left:58.50px;top:536px;letter-spacing:0.61px;">Maximum Number</span>
<span id="g_name" class="t lbl" style="left:228.20px;top:102px;letter-spacing:0.64px;">Name</span>
<span id="e_name" class="t" style="left:232.60px;top:119px;letter-spacing:0.30px;">Ship</span>
<span id="g_tg" class="t lbl" style="left:397.80px;top:102px;letter-spacing:0.76px;">Tileset Graphic</span>
<span id="e_tg" class="t" style="left:402.00px;top:120px;letter-spacing:0.97px;">Ship</span>
<span id="t_lower" class="t" style="left:229.90px;top:153px;letter-spacing:0.92px;">Lower Layer</span>
<span id="t_upper" class="t" style="left:321.00px;top:155px;letter-spacing:0.86px;">Upper Layer</span>
<span id="g_edit" class="t lbl" style="left:237.20px;top:180px;letter-spacing:1.02px;">Edit Mode</span>
<span id="b_terrain" class="t" style="left:296.40px;top:202px;letter-spacing:1.06px;">Terrain</span>
<span id="b_pass" class="t" style="left:281.80px;top:233px;letter-spacing:0.74px;">Passability</span>
<span id="b_passage" class="t" style="left:265.80px;top:265px;letter-spacing:0.83px;">Passage (4 Dir)</span>
<span id="b_global" class="t" style="left:236.80px;top:304px;letter-spacing:0.90px;">Global Terrain Setting</span>
<span id="g_auto" class="t lbl" style="left:237.70px;top:334px;letter-spacing:1.00px;">Autotile Animation</span>
<span id="g_seq" class="t lbl" style="left:246.30px;top:393px;letter-spacing:0.88px;">Sequence</span>
<span id="r_1232" class="t" style="left:266.50px;top:409px;letter-spacing:1.70px;">1-2-3-2</span>
<span id="r_123" class="t" style="left:266.50px;top:429px;letter-spacing:1.65px;">1-2-3</span>
<span id="g_speed" class="t lbl" style="left:246.20px;top:457px;letter-spacing:0.95px;">Speed</span>
<span id="r_slow" class="t" style="left:266.30px;top:473px;letter-spacing:0.64px;">Slow</span>
<span id="r_fast" class="t" style="left:264.70px;top:493px;letter-spacing:1.90px;">Fast</span>
<span id="g_terrain" class="t lbl" style="left:630.30px;top:180px;letter-spacing:0.86px;">Terrain</span>
<span id="t1" class="t" style="left:634.10px;top:197px;letter-spacing:0.65px;color:#fff">0001:Grassland</span>
<span id="t2" class="t" style="left:634.10px;top:211px;letter-spacing:0.80px;">0002:Forest</span>
<span id="t3" class="t" style="left:634.10px;top:225px;letter-spacing:0.80px;">0003:Desert</span>
<span id="t4" class="t" style="left:634.10px;top:239px;letter-spacing:0.92px;">0004:Wasteland</span>
<span id="t5" class="t" style="left:634.10px;top:253px;letter-spacing:0.57px;">0005:Poison Swamp</span>
<span id="t6" class="t" style="left:634.10px;top:267px;letter-spacing:0.78px;">0006:Snow</span>
<span id="t7" class="t" style="left:634.10px;top:281px;letter-spacing:0.73px;">0007:Snow: Forest</span>
<span id="t8" class="t" style="left:634.10px;top:295px;letter-spacing:0.58px;">0008:Damage Floor</span>
<span id="t9" class="t" style="left:634.10px;top:309px;letter-spacing:0.70px;">0009:Sea: Shore</span>
<span id="t10" class="t" style="left:634.10px;top:323px;letter-spacing:0.69px;">0010:Sea: Offshore</span>
<span id="b_ok" class="t" style="left:648.60px;top:600px;letter-spacing:0.00px;"><u>O</u>K</span>
<span id="b_cancel" class="t" style="left:731.10px;top:600px;letter-spacing:0.78px;">Cancel</span>
<span id="b_apply" class="t" style="left:832.00px;top:600px;letter-spacing:0.40px;"><u>A</u>pply</span>
<span id="b_help" class="t" style="left:930.40px;top:600px;letter-spacing:0.64px;"><u>H</u>elp</span>
</body></html>
